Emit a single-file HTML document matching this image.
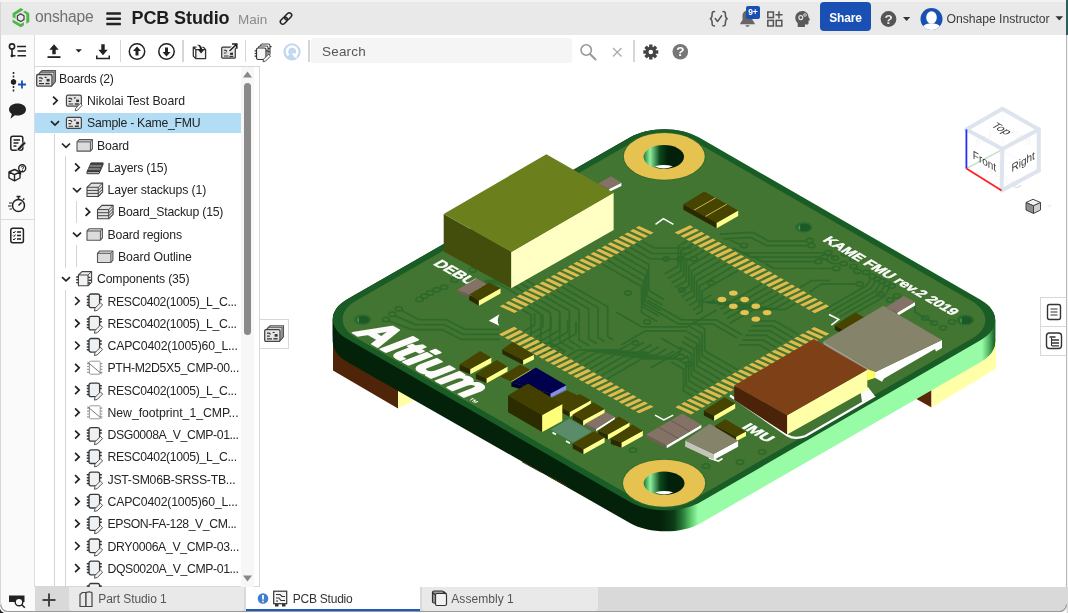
<!DOCTYPE html>
<html lang="en">
<head>
<meta charset="utf-8">
<title>PCB Studio | Onshape</title>
<style>
*{box-sizing:border-box;margin:0;padding:0}
html,body{width:1068px;height:613px;overflow:hidden;background:#fff;font-family:"Liberation Sans",sans-serif;color:#333}
#app{will-change:transform;position:relative;width:1068px;height:613px;overflow:hidden;background:#fff}
.abs{position:absolute}
#topbar{position:absolute;left:0;top:0;width:1068px;height:35px;background:#e9e9e9}
#leftbar{position:absolute;left:0;top:35px;width:35px;height:578px;background:#fafafa;border-right:1px solid #dcdcdc}
#toolbar{position:absolute;left:35px;top:35px;width:1033px;height:31px;background:#fff}
.sep{position:absolute;width:1.6px;background:#d6d6d6;top:40px;height:22px;margin-left:-0.3px}
#search{position:absolute;left:311px;top:38px;width:261px;height:25px;background:#f5f5f5;border-radius:3px}
#search span{position:absolute;left:11px;top:6px;font-size:13.5px;color:#555;letter-spacing:.2px}
#tree{position:absolute;left:35px;top:66px;width:225px;height:521px;border:1px solid #d8d8d8;border-left:none;background:#fff;overflow:hidden}
.row{position:absolute;left:0;height:22px;font-size:12.25px;color:#242424;white-space:nowrap;line-height:22px}
.row .t{position:absolute;top:0}
.sel{position:absolute;left:0;top:47px;width:206px;height:20px;background:#b3dcf5}
.chev{position:absolute;width:10px;height:10px}
.guide{position:absolute;width:1px;background:#d4d4d4}
#tabbar{position:absolute;left:35px;top:587px;width:1033px;height:26px;background:#d9d9d9}
.tab{position:absolute;top:0;height:24px;background:#e9e9e9;font-size:12px;color:#555;line-height:24.5px;border-radius:0 0 4px 4px}
.tab.active{background:#fff;color:#333;border-bottom:2px solid #1b5bbf;border-radius:0}
svg{display:block}
</style>
</head>
<body>
<div id="app">
<svg class="abs" style="left:0;top:0" width="1068" height="613" viewBox="0 0 1068 613">
<defs>
<clipPath id="hc483"><ellipse cx="664.1" cy="483.2" rx="20.4" ry="11.7"/></clipPath>
<clipPath id="hc156"><ellipse cx="663.8" cy="156.9" rx="20.2" ry="12.0"/></clipPath>
<linearGradient id="gside" gradientUnits="userSpaceOnUse" x1="330" x2="998" y1="0" y2="0"><stop offset="0" stop-color="#04220a"/><stop offset="0.495" stop-color="#04220a"/><stop offset="0.515" stop-color="#0c3c16"/><stop offset="0.528" stop-color="#2a7a38"/><stop offset="0.54" stop-color="#5cc86c"/><stop offset="0.551" stop-color="#98fca6"/><stop offset="0.976" stop-color="#98fca6"/><stop offset="0.986" stop-color="#55b866"/><stop offset="0.994" stop-color="#1f6a2e"/><stop offset="1" stop-color="#0f4a1c"/></linearGradient>
<linearGradient id="gright" x1="0" x2="1" y1="0" y2="0"><stop offset="0" stop-color="#9bfaa8"/><stop offset="0.5" stop-color="#63c873"/><stop offset="1" stop-color="#0f4a1c"/></linearGradient>
<linearGradient id="ghole" x1="0" x2="1" y1="0" y2="0"><stop offset="0" stop-color="#1e7a34"/><stop offset="0.16" stop-color="#8ff0a0"/><stop offset="0.4" stop-color="#0b4a1a"/><stop offset="0.6" stop-color="#03200a"/><stop offset="1" stop-color="#03200a"/></linearGradient>
</defs>
<polygon points="333.0,340.0 398.0,380.0 398.0,408.5 333.0,370.5" fill="#4f2408" />
<polygon points="398.0,380.0 416.0,396.0 416.0,399.5 398.0,408.5" fill="#ffffa6" />
<polygon points="915.5,380.0 931.5,380.0 931.5,407.5 915.5,398.5" fill="#5a250a" />
<polygon points="931.5,380.0 996.0,340.0 996.0,368.5 931.5,407.5" fill="#ffffa8" />
<path d="M629.9 158.5 C649.0 147.5 680.0 147.5 699.1 158.6 L980.9 321.9 C1000.0 333.0 1000.0 350.9 980.8 361.9 L701.0 522.9 C681.4 534.1 649.6 534.2 629.9 523.0 L347.3 362.0 C328.1 351.1 328.0 333.2 347.1 322.2 Z" fill="url(#gside)"/>
<path d="M629.9 157.7 C649.0 146.6 680.0 146.6 699.1 157.7 L980.9 321.0 C1000.0 332.1 1000.0 350.0 980.8 361.0 L701.0 522.0 C681.4 533.3 649.6 533.3 629.9 522.1 L347.3 361.0 C328.1 350.1 328.0 332.3 347.1 321.2 Z" fill="url(#gside)"/>
<path d="M629.9 156.8 C649.0 145.7 680.0 145.7 699.1 156.8 L980.9 320.1 C1000.0 331.2 1000.0 349.1 980.8 360.1 L701.0 521.1 C681.4 532.4 649.6 532.5 629.9 521.2 L347.2 360.1 C328.1 349.2 328.0 331.3 347.1 320.3 Z" fill="url(#gside)"/>
<path d="M629.9 155.9 C649.0 144.8 680.0 144.9 699.1 155.9 L980.9 319.2 C1000.0 330.3 1000.0 348.2 980.8 359.2 L701.0 520.2 C681.4 531.5 649.6 531.6 629.9 520.4 L347.2 359.1 C328.1 348.2 328.0 330.4 347.1 319.3 Z" fill="url(#gside)"/>
<path d="M629.9 155.0 C649.0 144.0 680.0 144.0 699.1 155.1 L980.9 318.3 C1000.0 329.4 1000.0 347.3 980.8 358.3 L701.0 519.3 C681.4 530.6 649.6 530.7 629.9 519.5 L347.2 358.2 C328.1 347.2 328.0 329.4 347.1 318.4 Z" fill="url(#gside)"/>
<path d="M629.9 154.1 C649.0 143.1 680.0 143.1 699.1 154.2 L980.9 317.4 C1000.0 328.4 1000.0 346.4 980.8 357.4 L701.0 518.5 C681.4 529.8 649.6 529.8 629.9 518.6 L347.2 357.2 C328.1 346.3 328.0 328.5 347.1 317.4 Z" fill="url(#gside)"/>
<path d="M629.9 153.2 C649.0 142.2 680.0 142.2 699.1 153.3 L980.9 316.5 C1000.0 327.5 1000.0 345.4 980.8 356.5 L701.0 517.6 C681.4 528.9 649.6 528.9 629.9 517.7 L347.2 356.3 C328.1 345.3 328.0 327.5 347.1 316.5 Z" fill="url(#gside)"/>
<path d="M629.9 152.4 C649.0 141.3 680.0 141.3 699.1 152.4 L980.9 315.5 C1000.0 326.6 1000.0 344.5 980.8 355.5 L701.0 516.7 C681.4 528.0 649.6 528.1 629.9 516.8 L347.2 355.3 C328.0 344.4 328.0 326.5 347.1 315.5 Z" fill="url(#gside)"/>
<path d="M629.9 151.5 C649.0 140.4 680.0 140.5 699.1 151.5 L980.9 314.6 C1000.0 325.7 1000.0 343.6 980.8 354.6 L701.0 515.8 C681.4 527.1 649.6 527.2 629.9 516.0 L347.2 354.4 C328.0 343.4 328.0 325.6 347.1 314.5 Z" fill="url(#gside)"/>
<path d="M629.8 150.6 C649.0 139.6 680.0 139.6 699.1 150.7 L980.9 313.7 C1000.0 324.8 1000.0 342.7 980.8 353.7 L701.0 515.0 C681.4 526.3 649.6 526.3 629.9 515.1 L347.2 353.4 C328.0 342.5 328.0 324.6 347.2 313.6 Z" fill="url(#gside)"/>
<path d="M629.8 149.7 C649.0 138.7 680.0 138.7 699.1 149.8 L980.9 312.8 C1000.0 323.9 1000.0 341.8 980.8 352.8 L701.0 514.1 C681.4 525.4 649.6 525.4 629.9 514.2 L347.2 352.5 C328.0 341.5 328.0 323.7 347.2 312.6 Z" fill="url(#gside)"/>
<path d="M629.8 148.8 C649.0 137.8 680.0 137.8 699.1 148.9 L980.9 311.9 C1000.0 322.9 1000.0 340.9 980.8 351.9 L701.0 513.2 C681.4 524.5 649.6 524.6 629.9 513.3 L347.2 351.5 C328.0 340.6 328.0 322.7 347.2 311.7 Z" fill="url(#gside)"/>
<path d="M629.8 148.0 C649.0 136.9 680.0 137.0 699.1 148.0 L980.9 311.0 C1000.0 322.0 1000.0 339.9 980.8 351.0 L701.0 512.3 C681.4 523.6 649.6 523.7 629.9 512.4 L347.2 350.6 C328.0 339.6 328.0 321.8 347.2 310.7 Z" fill="url(#gside)"/>
<path d="M629.8 147.1 C649.0 136.1 680.0 136.1 699.1 147.1 L980.9 310.1 C1000.0 321.1 1000.0 339.0 980.8 350.1 L701.0 511.4 C681.4 522.8 649.6 522.8 629.9 511.5 L347.2 349.6 C328.0 338.6 328.0 320.8 347.2 309.8 Z" fill="url(#gside)"/>
<path d="M629.8 146.2 C649.0 135.2 680.0 135.2 699.1 146.3 L980.9 309.1 C1000.0 320.2 1000.0 338.1 980.9 349.2 L701.0 510.6 C681.4 521.9 649.6 521.9 629.9 510.7 L347.2 348.7 C328.0 337.7 328.0 319.9 347.2 308.8 Z" fill="url(#gside)"/>
<path d="M629.8 145.3 C649.0 134.3 680.0 134.3 699.1 145.4 L980.9 308.2 C1000.0 319.3 1000.0 337.2 980.9 348.2 L701.0 509.7 C681.4 521.0 649.6 521.0 629.9 509.8 L347.2 347.7 C328.0 336.7 328.0 318.9 347.2 307.9 Z" fill="url(#gside)"/>
<path d="M629.8 144.4 C649.0 133.4 680.0 133.5 699.1 144.5 L980.9 307.3 C1000.0 318.4 1000.0 336.3 980.9 347.3 L701.0 508.8 C681.4 520.1 649.6 520.2 629.9 508.9 L347.2 346.8 C328.0 335.8 328.0 317.9 347.2 306.9 Z" fill="url(#gside)"/>
<path d="M629.8 143.6 C649.0 132.5 680.0 132.6 699.1 143.6 L980.9 306.4 C1000.0 317.5 1000.0 335.4 980.9 346.4 L701.0 507.9 C681.4 519.2 649.6 519.3 629.9 508.0 L347.2 345.8 C328.0 334.8 328.0 317.0 347.2 306.0 Z" fill="url(#gside)"/>
<path d="M629.8 142.7 C649.0 131.7 680.0 131.7 699.1 142.8 L980.9 305.5 C1000.0 316.5 1000.0 334.5 980.9 345.5 L701.0 507.1 C681.4 518.4 649.6 518.4 629.9 507.1 L347.2 344.9 C328.0 333.9 328.0 316.0 347.2 305.0 Z" fill="url(#gside)"/>
<path d="M629.8 141.8 C649.0 130.8 680.0 130.8 699.1 141.9 L980.9 304.6 C1000.0 315.6 1000.0 333.5 980.9 344.6 L701.0 506.2 C681.4 517.5 649.6 517.5 629.9 506.3 L347.2 343.9 C328.0 332.9 328.0 315.1 347.2 304.1 Z" fill="url(#gside)"/>
<path d="M629.8 140.9 C649.0 129.9 680.0 130.0 699.1 141.0 L980.9 303.7 C1000.0 314.7 1000.0 332.6 980.9 343.7 L701.0 505.3 C681.4 516.6 649.6 516.7 629.9 505.4 L347.2 343.0 C328.0 332.0 328.0 314.1 347.2 303.1 Z" fill="url(#gside)"/>
<path d="M629.8 140.0 C649.0 129.0 680.0 129.1 699.1 140.1 L980.9 302.8 C1000.0 313.8 1000.0 331.7 980.9 342.8 L701.0 504.4 C681.4 515.7 649.6 515.8 630.0 504.5 L347.2 342.0 C328.0 331.0 328.0 313.2 347.2 302.2 Z" fill="url(#gside)"/>
<path d="M629.8 139.1 C649.0 128.2 680.0 128.2 699.1 139.2 L980.9 301.8 C1000.0 312.9 1000.0 330.8 980.9 341.8 L701.0 503.5 C681.4 514.9 649.6 514.9 630.0 503.6 L347.2 341.1 C328.0 330.0 328.0 312.2 347.2 301.2 Z" fill="url(#gside)"/>
<path d="M629.8 138.3 C649.0 127.3 680.0 127.3 699.1 138.4 L980.9 300.9 C1000.0 312.0 1000.0 329.9 980.9 340.9 L701.0 502.7 C681.4 514.0 649.6 514.0 630.0 502.7 L347.2 340.1 C328.0 329.1 328.0 311.3 347.2 300.3 Z" fill="url(#gside)"/>
<path d="M629.8 137.4 C649.0 126.4 680.0 126.4 699.1 137.5 L980.9 300.0 C1000.0 311.1 1000.0 329.0 980.9 340.0 L701.0 501.8 C681.4 513.1 649.6 513.1 630.0 501.9 L347.2 339.1 C328.0 328.1 328.0 310.3 347.2 299.3 Z" fill="url(#gside)"/>
<line x1="522.0" y1="461.8" x2="541.5" y2="472.4" stroke="#4a3a10" stroke-width="1.0" />
<line x1="548.0" y1="475.8" x2="567.0" y2="486.2" stroke="#4a3a10" stroke-width="1.0" />
<path d="M629.8 137.4 C649.0 126.4 680.0 126.4 699.1 137.5 L980.9 300.0 C1000.0 311.1 1000.0 329.0 980.9 340.0 L701.0 501.8 C681.4 513.1 649.6 513.1 630.0 501.9 L347.2 339.1 C328.0 328.1 328.0 310.3 347.2 299.3 Z" fill="#1a5c26"/>
<path d="M632.2 142.4 C650.0 132.2 678.9 132.2 696.7 142.5 L972.0 301.3 C989.8 311.6 989.8 328.3 972.1 338.6 L698.5 496.7 C680.2 507.2 650.7 507.2 632.4 496.7 L356.0 337.7 C338.2 327.5 338.2 310.9 356.0 300.7 Z" fill="#427531"/>
<ellipse cx="362.5" cy="319.6" rx="8.8" ry="5.3" fill="#2b6b2e" />
<ellipse cx="363.1" cy="319.8" rx="6.3" ry="3.8" fill="#1b5a27" />
<path d="M358.7 317.9 q-1.6 2 0 4" stroke="#4f9a52" stroke-width="1.3" fill="none"/>
<ellipse cx="965.4" cy="320.0" rx="8.8" ry="5.3" fill="#2b6b2e" />
<ellipse cx="966.0" cy="320.2" rx="6.3" ry="3.8" fill="#1b5a27" />
<path d="M961.6 318.3 q-1.6 2 0 4" stroke="#4f9a52" stroke-width="1.3" fill="none"/>
<ellipse cx="803.7" cy="227.3" rx="8.8" ry="5.3" fill="#2b6b2e" />
<ellipse cx="804.3" cy="227.5" rx="6.3" ry="3.8" fill="#1b5a27" />
<path d="M799.9 225.6 q-1.6 2 0 4" stroke="#4f9a52" stroke-width="1.3" fill="none"/>
<ellipse cx="664.3" cy="156.4" rx="41.5" ry="24.1" fill="#2f6a2a" />
<ellipse cx="664.3" cy="156.4" rx="40.5" ry="23.3" fill="#e6c251" />
<ellipse cx="663.8" cy="156.9" rx="20.2" ry="12.0" fill="url(#ghole)" />
<path d="M654.8 166.3 Q663.8 163.5 672.8 166.3 Q663.8 170.7 654.8 166.3Z" fill="#fff" clip-path="url(#hc156)"/>
<ellipse cx="664.1" cy="483.2" rx="42.1" ry="24.3" fill="#2f6a2a" />
<ellipse cx="664.1" cy="483.2" rx="41.1" ry="23.5" fill="#e6c251" />
<ellipse cx="664.1" cy="483.2" rx="20.4" ry="11.7" fill="url(#ghole)" />
<path d="M655.1 492.3 Q664.1 489.5 673.1 492.3 Q664.1 496.7 655.1 492.3Z" fill="#fff" clip-path="url(#hc483)"/>
<polyline points="522.5,309.9 531.1,314.9 531.1,344.9 550.2,355.9" fill="none" stroke="#2c692b" stroke-width="1.7" stroke-linejoin="round"/>
<polyline points="528.1,306.6 540.7,313.9 540.7,343.9 558.0,353.9" fill="none" stroke="#2c692b" stroke-width="1.7" stroke-linejoin="round"/>
<polyline points="533.8,303.3 550.3,312.8 550.3,342.8 565.9,351.8" fill="none" stroke="#2c692b" stroke-width="1.7" stroke-linejoin="round"/>
<polyline points="539.5,300.1 559.8,311.8 559.8,341.8 573.7,349.8" fill="none" stroke="#2c692b" stroke-width="1.7" stroke-linejoin="round"/>
<polyline points="545.2,296.8 569.4,310.8 569.4,340.8 581.5,347.8" fill="none" stroke="#2c692b" stroke-width="1.7" stroke-linejoin="round"/>
<polyline points="550.8,293.5 579.0,309.8 579.0,339.8 589.4,345.8" fill="none" stroke="#2c692b" stroke-width="1.7" stroke-linejoin="round"/>
<polyline points="556.5,290.2 588.6,308.8 588.6,338.8 597.2,343.8" fill="none" stroke="#2c692b" stroke-width="1.7" stroke-linejoin="round"/>
<polyline points="562.2,287.0 598.1,307.7 598.1,337.7 605.0,341.7" fill="none" stroke="#2c692b" stroke-width="1.7" stroke-linejoin="round"/>
<polyline points="567.9,283.7 607.7,306.7 607.7,336.7 612.9,339.7" fill="none" stroke="#2c692b" stroke-width="1.7" stroke-linejoin="round"/>
<polyline points="602.1,263.9 641.6,286.6 641.6,312.6 657.1,321.6" fill="none" stroke="#2c692b" stroke-width="1.7" stroke-linejoin="round"/>
<polyline points="607.8,260.6 643.3,281.1 643.3,307.1 658.9,316.1" fill="none" stroke="#2c692b" stroke-width="1.7" stroke-linejoin="round"/>
<polyline points="613.5,257.3 645.1,275.6 645.1,301.6 660.7,310.6" fill="none" stroke="#2c692b" stroke-width="1.7" stroke-linejoin="round"/>
<polyline points="619.2,254.1 646.9,270.1 646.9,296.1 662.5,305.1" fill="none" stroke="#2c692b" stroke-width="1.7" stroke-linejoin="round"/>
<polyline points="624.8,250.8 648.7,264.5 648.7,290.5 664.2,299.5" fill="none" stroke="#2c692b" stroke-width="1.7" stroke-linejoin="round"/>
<polyline points="630.5,247.5 650.4,259.0 688.5,259.0" fill="none" stroke="#2c692b" stroke-width="1.7" stroke-linejoin="round"/>
<polyline points="636.2,244.2 652.2,253.5 690.3,253.5" fill="none" stroke="#2c692b" stroke-width="1.7" stroke-linejoin="round"/>
<polyline points="641.9,241.0 654.0,248.0 692.1,248.0" fill="none" stroke="#2c692b" stroke-width="1.7" stroke-linejoin="round"/>
<ellipse cx="666.2" cy="258.9" rx="3.3" ry="2.0" fill="none" stroke="#2c692b" stroke-width="1.6"/>
<ellipse cx="680.1" cy="258.9" rx="3.3" ry="2.0" fill="none" stroke="#2c692b" stroke-width="1.6"/>
<ellipse cx="693.9" cy="258.9" rx="3.3" ry="2.0" fill="none" stroke="#2c692b" stroke-width="1.6"/>
<polyline points="567.5,355.9 577.9,349.9 619.5,349.9 636.8,339.9" fill="none" stroke="#2c692b" stroke-width="1.7" stroke-linejoin="round"/>
<polyline points="573.2,359.2 587.0,351.2 628.6,351.2 644.2,342.2" fill="none" stroke="#2c692b" stroke-width="1.7" stroke-linejoin="round"/>
<polyline points="578.9,362.4 596.2,352.4 637.7,352.4 651.6,344.4" fill="none" stroke="#2c692b" stroke-width="1.7" stroke-linejoin="round"/>
<polyline points="584.5,365.7 605.3,353.7 646.9,353.7 659.0,346.7" fill="none" stroke="#2c692b" stroke-width="1.7" stroke-linejoin="round"/>
<polyline points="590.2,369.0 614.4,355.0 656.0,355.0 666.4,349.0" fill="none" stroke="#2c692b" stroke-width="1.7" stroke-linejoin="round"/>
<polyline points="595.9,372.3 623.6,356.3 665.1,356.3 673.8,351.3" fill="none" stroke="#2c692b" stroke-width="1.7" stroke-linejoin="round"/>
<polyline points="601.5,375.5 632.7,357.5 674.3,357.5 681.2,353.5" fill="none" stroke="#2c692b" stroke-width="1.7" stroke-linejoin="round"/>
<polyline points="607.2,378.8 641.9,358.8 683.4,358.8 688.6,355.8" fill="none" stroke="#2c692b" stroke-width="1.7" stroke-linejoin="round"/>
<polyline points="524.2,330.9 534.6,324.9 534.6,312.9" fill="none" stroke="#2c692b" stroke-width="1.7" stroke-linejoin="round"/>
<polyline points="529.9,334.2 542.9,326.7 542.9,314.7" fill="none" stroke="#2c692b" stroke-width="1.7" stroke-linejoin="round"/>
<polyline points="535.6,337.4 551.1,328.4 551.1,316.4" fill="none" stroke="#2c692b" stroke-width="1.7" stroke-linejoin="round"/>
<polyline points="541.2,340.7 559.4,330.2 559.4,318.2" fill="none" stroke="#2c692b" stroke-width="1.7" stroke-linejoin="round"/>
<polyline points="546.9,344.0 567.7,332.0 567.7,320.0" fill="none" stroke="#2c692b" stroke-width="1.7" stroke-linejoin="round"/>
<polyline points="552.6,347.3 576.0,333.8 576.0,321.8" fill="none" stroke="#2c692b" stroke-width="1.7" stroke-linejoin="round"/>
<polyline points="687.0,240.9 678.4,245.9 678.4,265.9 664.5,273.9" fill="none" stroke="#2c692b" stroke-width="1.7" stroke-linejoin="round"/>
<polyline points="692.7,244.2 681.0,250.9 681.0,270.9 668.0,278.4" fill="none" stroke="#2c692b" stroke-width="1.7" stroke-linejoin="round"/>
<polyline points="698.4,247.4 683.6,255.9 683.6,275.9 671.5,282.9" fill="none" stroke="#2c692b" stroke-width="1.7" stroke-linejoin="round"/>
<polyline points="704.0,250.7 686.3,261.0 686.3,281.0 675.0,287.5" fill="none" stroke="#2c692b" stroke-width="1.7" stroke-linejoin="round"/>
<polyline points="709.7,254.0 688.9,266.0 688.9,286.0 678.5,292.0" fill="none" stroke="#2c692b" stroke-width="1.7" stroke-linejoin="round"/>
<polyline points="715.4,257.3 691.6,271.0 691.6,291.0 682.0,296.5" fill="none" stroke="#2c692b" stroke-width="1.7" stroke-linejoin="round"/>
<polyline points="721.0,260.5 694.2,276.0 694.2,296.0 685.5,301.0" fill="none" stroke="#2c692b" stroke-width="1.7" stroke-linejoin="round"/>
<polyline points="726.7,263.8 696.8,281.1 696.8,301.1 689.1,305.6" fill="none" stroke="#2c692b" stroke-width="1.7" stroke-linejoin="round"/>
<polyline points="732.4,267.1 699.5,286.1 699.5,306.1 692.6,310.1" fill="none" stroke="#2c692b" stroke-width="1.7" stroke-linejoin="round"/>
<polyline points="738.1,270.4 702.1,291.1 702.1,311.1 696.1,314.6" fill="none" stroke="#2c692b" stroke-width="1.7" stroke-linejoin="round"/>
<polyline points="761.5,283.9 730.3,301.9 699.1,301.9 711.3,294.9" fill="none" stroke="#2c692b" stroke-width="1.7" stroke-linejoin="round"/>
<polyline points="767.2,287.2 739.5,303.2 708.3,303.2 714.3,299.7" fill="none" stroke="#2c692b" stroke-width="1.7" stroke-linejoin="round"/>
<polyline points="772.8,290.4 748.6,304.4 717.4,304.4 717.4,304.4" fill="none" stroke="#2c692b" stroke-width="1.7" stroke-linejoin="round"/>
<polyline points="778.5,293.7 757.7,305.7 726.5,305.7 720.5,309.2" fill="none" stroke="#2c692b" stroke-width="1.7" stroke-linejoin="round"/>
<polyline points="784.2,297.0 766.9,307.0 735.7,307.0 723.6,314.0" fill="none" stroke="#2c692b" stroke-width="1.7" stroke-linejoin="round"/>
<polyline points="789.9,300.3 776.0,308.3 744.8,308.3 726.6,318.8" fill="none" stroke="#2c692b" stroke-width="1.7" stroke-linejoin="round"/>
<polyline points="795.5,303.5 785.1,309.5 754.0,309.5 729.7,323.5" fill="none" stroke="#2c692b" stroke-width="1.7" stroke-linejoin="round"/>
<polyline points="692.2,395.9 683.6,390.9 683.6,368.9 671.4,361.9" fill="none" stroke="#2c692b" stroke-width="1.7" stroke-linejoin="round"/>
<polyline points="697.9,392.6 686.2,385.9 686.2,363.9 674.1,356.9" fill="none" stroke="#2c692b" stroke-width="1.7" stroke-linejoin="round"/>
<polyline points="703.6,389.3 688.8,380.8 688.8,358.8 676.7,351.8" fill="none" stroke="#2c692b" stroke-width="1.7" stroke-linejoin="round"/>
<polyline points="709.2,386.1 691.5,375.8 691.5,353.8 679.4,346.8" fill="none" stroke="#2c692b" stroke-width="1.7" stroke-linejoin="round"/>
<polyline points="714.9,382.8 694.1,370.8 694.1,348.8 682.0,341.8" fill="none" stroke="#2c692b" stroke-width="1.7" stroke-linejoin="round"/>
<polyline points="720.6,379.5 696.8,365.8 696.8,343.8 684.6,336.8" fill="none" stroke="#2c692b" stroke-width="1.7" stroke-linejoin="round"/>
<polyline points="726.2,376.2 699.4,360.8 699.4,338.8 687.3,331.8" fill="none" stroke="#2c692b" stroke-width="1.7" stroke-linejoin="round"/>
<polyline points="731.9,373.0 702.0,355.7 702.0,333.7 689.9,326.7" fill="none" stroke="#2c692b" stroke-width="1.7" stroke-linejoin="round"/>
<polyline points="737.6,369.7 704.7,350.7 704.7,328.7 692.6,321.7" fill="none" stroke="#2c692b" stroke-width="1.7" stroke-linejoin="round"/>
<polyline points="770.2,350.9 759.8,344.9 739.0,344.9" fill="none" stroke="#2c692b" stroke-width="1.7" stroke-linejoin="round"/>
<polyline points="775.8,347.6 762.8,340.1 742.1,340.1" fill="none" stroke="#2c692b" stroke-width="1.7" stroke-linejoin="round"/>
<polyline points="781.5,344.3 765.9,335.3 745.1,335.3" fill="none" stroke="#2c692b" stroke-width="1.7" stroke-linejoin="round"/>
<polyline points="787.2,341.1 769.0,330.6 748.2,330.6" fill="none" stroke="#2c692b" stroke-width="1.7" stroke-linejoin="round"/>
<polyline points="792.8,337.8 772.1,325.8 751.3,325.8" fill="none" stroke="#2c692b" stroke-width="1.7" stroke-linejoin="round"/>
<polyline points="798.5,334.5 775.1,321.0 754.3,321.0" fill="none" stroke="#2c692b" stroke-width="1.7" stroke-linejoin="round"/>
<polyline points="647.2,299.9 681.8,319.9 716.5,319.9 742.4,334.9" fill="none" stroke="#2c692b" stroke-width="1.7" stroke-linejoin="round"/>
<polyline points="642.0,302.9 678.4,323.9 713.0,323.9 737.2,337.9" fill="none" stroke="#2c692b" stroke-width="1.7" stroke-linejoin="round"/>
<polyline points="616.0,311.9 642.0,326.9 687.0,326.9 716.5,309.9" fill="none" stroke="#2c692b" stroke-width="1.7" stroke-linejoin="round"/>
<polyline points="621.2,344.9 645.4,330.9 687.0,330.9" fill="none" stroke="#2c692b" stroke-width="1.7" stroke-linejoin="round"/>
<polyline points="650.6,367.9 681.8,349.9 661.0,337.9" fill="none" stroke="#2c692b" stroke-width="1.7" stroke-linejoin="round"/>
<ellipse cx="647.2" cy="321.9" rx="3.3" ry="2.0" fill="none" stroke="#2c692b" stroke-width="1.6"/>
<ellipse cx="635.1" cy="342.9" rx="3.3" ry="2.0" fill="none" stroke="#2c692b" stroke-width="1.6"/>
<ellipse cx="643.7" cy="353.9" rx="3.3" ry="2.0" fill="none" stroke="#2c692b" stroke-width="1.6"/>
<ellipse cx="699.1" cy="347.9" rx="3.3" ry="2.0" fill="none" stroke="#2c692b" stroke-width="1.6"/>
<ellipse cx="681.8" cy="289.9" rx="3.3" ry="2.0" fill="none" stroke="#2c692b" stroke-width="1.6"/>
<ellipse cx="628.1" cy="292.9" rx="3.3" ry="2.0" fill="none" stroke="#2c692b" stroke-width="1.6"/>
<ellipse cx="739.0" cy="306.9" rx="3.3" ry="2.0" fill="none" stroke="#2c692b" stroke-width="1.6"/>
<ellipse cx="688.7" cy="363.9" rx="3.3" ry="2.0" fill="none" stroke="#2c692b" stroke-width="1.6"/>
<ellipse cx="711.3" cy="282.9" rx="3.3" ry="2.0" fill="none" stroke="#2c692b" stroke-width="1.6"/>
<polyline points="719.6,234.2 752.8,232.3 768.5,241.1 806.7,241.1" fill="none" stroke="#2c692b" stroke-width="1.7" stroke-linejoin="round"/>
<ellipse cx="809.8" cy="240.6" rx="3.5" ry="2.2" fill="none" stroke="#2c692b" stroke-width="1.6"/>
<polyline points="723.5,238.8 750.9,237.4 766.5,245.6 808.0,245.6" fill="none" stroke="#2c692b" stroke-width="1.7" stroke-linejoin="round"/>
<ellipse cx="811.5" cy="245.6" rx="3.5" ry="2.2" fill="none" stroke="#2c692b" stroke-width="1.6"/>
<ellipse cx="744.0" cy="245.4" rx="3.5" ry="2.2" fill="none" stroke="#2c692b" stroke-width="1.6"/>
<polyline points="730.0,240.0 741.0,245.0" fill="none" stroke="#2c692b" stroke-width="1.7" stroke-linejoin="round"/>
<polyline points="733.0,247.8 742.0,252.8 825.0,252.8" fill="none" stroke="#2c692b" stroke-width="1.7" stroke-linejoin="round"/>
<ellipse cx="828.4" cy="252.8" rx="3.5" ry="2.2" fill="none" stroke="#2c692b" stroke-width="1.6"/>
<polyline points="742.0,252.1 751.0,257.1 821.0,257.1" fill="none" stroke="#2c692b" stroke-width="1.7" stroke-linejoin="round"/>
<ellipse cx="824.4" cy="257.1" rx="3.5" ry="2.2" fill="none" stroke="#2c692b" stroke-width="1.6"/>
<polyline points="753.0,256.6 762.0,261.6 815.0,261.6" fill="none" stroke="#2c692b" stroke-width="1.7" stroke-linejoin="round"/>
<ellipse cx="818.4" cy="261.6" rx="3.5" ry="2.2" fill="none" stroke="#2c692b" stroke-width="1.6"/>
<polyline points="765.0,263.5 774.0,268.5 833.0,268.5" fill="none" stroke="#2c692b" stroke-width="1.7" stroke-linejoin="round"/>
<ellipse cx="836.4" cy="268.5" rx="3.5" ry="2.2" fill="none" stroke="#2c692b" stroke-width="1.6"/>
<polyline points="828.0,254.0 835.0,258.1" fill="none" stroke="#2c692b" stroke-width="1.7" stroke-linejoin="round"/>
<polyline points="824.0,258.5 832.0,263.5 841.0,263.6" fill="none" stroke="#2c692b" stroke-width="1.7" stroke-linejoin="round"/>
<ellipse cx="835.0" cy="258.1" rx="3.5" ry="2.2" fill="none" stroke="#2c692b" stroke-width="1.6"/>
<ellipse cx="843.8" cy="263.6" rx="3.5" ry="2.2" fill="none" stroke="#2c692b" stroke-width="1.6"/>
<ellipse cx="853.6" cy="266.5" rx="3.5" ry="2.2" fill="none" stroke="#2c692b" stroke-width="1.6"/>
<ellipse cx="857.5" cy="271.4" rx="3.5" ry="2.2" fill="none" stroke="#2c692b" stroke-width="1.6"/>
<ellipse cx="866.3" cy="272.4" rx="3.5" ry="2.2" fill="none" stroke="#2c692b" stroke-width="1.6"/>
<ellipse cx="845.0" cy="254.0" rx="3.5" ry="2.2" fill="none" stroke="#2c692b" stroke-width="1.6"/>
<ellipse cx="853.0" cy="259.0" rx="3.5" ry="2.2" fill="none" stroke="#2c692b" stroke-width="1.6"/>
<polyline points="809.6,292.0 821.3,284.1 856.6,284.1" fill="none" stroke="#2c692b" stroke-width="1.7" stroke-linejoin="round"/>
<ellipse cx="859.8" cy="284.1" rx="3.5" ry="2.2" fill="none" stroke="#2c692b" stroke-width="1.6"/>
<polyline points="800.0,287.5 812.0,280.5 830.0,280.5" fill="none" stroke="#2c692b" stroke-width="1.7" stroke-linejoin="round"/>
<polyline points="826.0,309.0 866.0,286.0 871.0,279.0" fill="none" stroke="#2c692b" stroke-width="1.7" stroke-linejoin="round"/>
<ellipse cx="872.5" cy="276.5" rx="3.5" ry="2.2" fill="none" stroke="#2c692b" stroke-width="1.6"/>
<polyline points="830.6,311.6 870.6,288.6 875.6,281.2" fill="none" stroke="#2c692b" stroke-width="1.7" stroke-linejoin="round"/>
<ellipse cx="877.3" cy="278.9" rx="3.5" ry="2.2" fill="none" stroke="#2c692b" stroke-width="1.6"/>
<polyline points="835.2,314.2 875.2,291.2 880.2,283.4" fill="none" stroke="#2c692b" stroke-width="1.7" stroke-linejoin="round"/>
<ellipse cx="882.1" cy="281.3" rx="3.5" ry="2.2" fill="none" stroke="#2c692b" stroke-width="1.6"/>
<polyline points="839.8,316.8 879.8,293.8 884.8,285.6" fill="none" stroke="#2c692b" stroke-width="1.7" stroke-linejoin="round"/>
<ellipse cx="886.9" cy="283.7" rx="3.5" ry="2.2" fill="none" stroke="#2c692b" stroke-width="1.6"/>
<polyline points="844.4,319.4 884.4,296.4 889.4,287.8" fill="none" stroke="#2c692b" stroke-width="1.7" stroke-linejoin="round"/>
<ellipse cx="891.7" cy="286.1" rx="3.5" ry="2.2" fill="none" stroke="#2c692b" stroke-width="1.6"/>
<ellipse cx="890.0" cy="300.0" rx="3.5" ry="2.2" fill="none" stroke="#2c692b" stroke-width="1.6"/>
<ellipse cx="897.0" cy="296.0" rx="3.5" ry="2.2" fill="none" stroke="#2c692b" stroke-width="1.6"/>
<ellipse cx="880.0" cy="294.0" rx="3.5" ry="2.2" fill="none" stroke="#2c692b" stroke-width="1.6"/>
<ellipse cx="419.5" cy="299.5" rx="3.6" ry="2.2" fill="none" stroke="#2c692b" stroke-width="1.6"/>
<ellipse cx="424.4" cy="296.3" rx="3.6" ry="2.2" fill="none" stroke="#2c692b" stroke-width="1.6"/>
<ellipse cx="430.1" cy="293.0" rx="3.6" ry="2.2" fill="none" stroke="#2c692b" stroke-width="1.6"/>
<ellipse cx="436.7" cy="289.8" rx="3.6" ry="2.2" fill="none" stroke="#2c692b" stroke-width="1.6"/>
<ellipse cx="444.0" cy="287.3" rx="3.6" ry="2.2" fill="none" stroke="#2c692b" stroke-width="1.6"/>
<ellipse cx="454.6" cy="280.0" rx="3.6" ry="2.2" fill="none" stroke="#2c692b" stroke-width="1.6"/>
<ellipse cx="472.6" cy="270.2" rx="3.6" ry="2.2" fill="none" stroke="#2c692b" stroke-width="1.6"/>
<ellipse cx="398.8" cy="308.8" rx="3.5" ry="2.2" fill="none" stroke="#2c692b" stroke-width="1.6"/>
<polyline points="401.3,310.2 418.3,319.6 445.8,319.6 465.3,329.4 500.0,329.4" fill="none" stroke="#2c692b" stroke-width="1.7" stroke-linejoin="round"/>
<ellipse cx="392.4" cy="314.2" rx="3.5" ry="2.2" fill="none" stroke="#2c692b" stroke-width="1.6"/>
<polyline points="394.9,315.6 415.3,324.6 443.8,324.6 463.3,334.4 500.0,334.4" fill="none" stroke="#2c692b" stroke-width="1.7" stroke-linejoin="round"/>
<ellipse cx="386.0" cy="319.6" rx="3.5" ry="2.2" fill="none" stroke="#2c692b" stroke-width="1.6"/>
<polyline points="388.5,321.0 412.3,329.6 441.8,329.6 461.3,339.4 500.0,339.4" fill="none" stroke="#2c692b" stroke-width="1.7" stroke-linejoin="round"/>
<polyline points="534.6,284.9 524.2,278.9 493.0,278.9" fill="none" stroke="#2c692b" stroke-width="1.7" stroke-linejoin="round"/>
<polyline points="528.9,288.2 515.9,280.7 484.8,280.7" fill="none" stroke="#2c692b" stroke-width="1.7" stroke-linejoin="round"/>
<polyline points="523.3,291.4 507.7,282.4 476.5,282.4" fill="none" stroke="#2c692b" stroke-width="1.7" stroke-linejoin="round"/>
<polyline points="517.6,294.7 499.4,284.2 468.2,284.2" fill="none" stroke="#2c692b" stroke-width="1.7" stroke-linejoin="round"/>
<ellipse cx="633.0" cy="450.0" rx="3.7" ry="2.3" fill="none" stroke="#2c692b" stroke-width="1.6"/>
<ellipse cx="762.0" cy="452.0" rx="3.7" ry="2.3" fill="none" stroke="#2c692b" stroke-width="1.6"/>
<ellipse cx="740.0" cy="462.0" rx="3.7" ry="2.3" fill="none" stroke="#2c692b" stroke-width="1.6"/>
<ellipse cx="706.0" cy="466.0" rx="3.7" ry="2.3" fill="none" stroke="#2c692b" stroke-width="1.6"/>
<ellipse cx="560.0" cy="352.0" rx="3.7" ry="2.3" fill="none" stroke="#2c692b" stroke-width="1.6"/>
<ellipse cx="548.0" cy="345.0" rx="3.7" ry="2.3" fill="none" stroke="#2c692b" stroke-width="1.6"/>
<ellipse cx="925.0" cy="318.0" rx="3.5" ry="2.2" fill="none" stroke="#2c692b" stroke-width="1.6"/>
<ellipse cx="934.0" cy="323.0" rx="3.5" ry="2.2" fill="none" stroke="#2c692b" stroke-width="1.6"/>
<ellipse cx="943.0" cy="328.0" rx="3.5" ry="2.2" fill="none" stroke="#2c692b" stroke-width="1.6"/>
<ellipse cx="952.0" cy="322.0" rx="3.5" ry="2.2" fill="none" stroke="#2c692b" stroke-width="1.6"/>
<ellipse cx="905.0" cy="330.0" rx="3.5" ry="2.2" fill="none" stroke="#2c692b" stroke-width="1.6"/>
<polyline points="925.0,318.0 915.0,312.0 915.0,306.0" fill="none" stroke="#2c692b" stroke-width="1.7" stroke-linejoin="round"/>
<polyline points="934.0,323.0 924.0,317.0" fill="none" stroke="#2c692b" stroke-width="1.7" stroke-linejoin="round"/>
<polygon points="499.7,306.2 514.4,313.0 517.7,311.2 503.0,304.4" fill="#dfba4d" />
<polygon points="505.4,303.0 520.1,309.8 523.4,307.9 508.7,301.1" fill="#dfba4d" />
<polygon points="511.0,299.7 525.7,306.5 529.0,304.6 514.3,297.8" fill="#dfba4d" />
<polygon points="516.7,296.4 531.4,303.2 534.7,301.3 520.0,294.5" fill="#dfba4d" />
<polygon points="522.4,293.2 537.1,300.0 540.4,298.1 525.7,291.3" fill="#dfba4d" />
<polygon points="528.0,289.9 542.7,296.7 546.0,294.8 531.3,288.0" fill="#dfba4d" />
<polygon points="533.7,286.6 548.4,293.4 551.7,291.5 537.0,284.7" fill="#dfba4d" />
<polygon points="539.4,283.4 554.1,290.2 557.4,288.3 542.7,281.5" fill="#dfba4d" />
<polygon points="545.0,280.1 559.7,286.9 563.0,285.0 548.3,278.2" fill="#dfba4d" />
<polygon points="550.7,276.8 565.4,283.6 568.7,281.7 554.0,274.9" fill="#dfba4d" />
<polygon points="556.4,273.5 571.1,280.3 574.4,278.4 559.7,271.6" fill="#dfba4d" />
<polygon points="562.0,270.3 576.7,277.1 580.0,275.2 565.3,268.4" fill="#dfba4d" />
<polygon points="567.7,267.0 582.4,273.8 585.7,271.9 571.0,265.1" fill="#dfba4d" />
<polygon points="573.4,263.7 588.1,270.5 591.4,268.6 576.7,261.8" fill="#dfba4d" />
<polygon points="579.0,260.5 593.7,267.3 597.0,265.4 582.3,258.6" fill="#dfba4d" />
<polygon points="584.7,257.2 599.4,264.0 602.7,262.1 588.0,255.3" fill="#dfba4d" />
<polygon points="590.4,253.9 605.1,260.7 608.4,258.8 593.7,252.0" fill="#dfba4d" />
<polygon points="596.0,250.6 610.7,257.4 614.0,255.5 599.3,248.7" fill="#dfba4d" />
<polygon points="601.7,247.4 616.4,254.2 619.7,252.3 605.0,245.5" fill="#dfba4d" />
<polygon points="607.4,244.1 622.1,250.9 625.4,249.0 610.7,242.2" fill="#dfba4d" />
<polygon points="613.0,240.8 627.7,247.6 631.0,245.7 616.3,238.9" fill="#dfba4d" />
<polygon points="618.7,237.6 633.4,244.4 636.7,242.5 622.0,235.7" fill="#dfba4d" />
<polygon points="624.4,234.3 639.1,241.1 642.4,239.2 627.7,232.4" fill="#dfba4d" />
<polygon points="630.0,231.0 644.7,237.8 648.0,235.9 633.3,229.1" fill="#dfba4d" />
<polygon points="635.7,227.7 650.4,234.5 653.7,232.7 639.0,225.9" fill="#dfba4d" />
<polygon points="674.8,232.6 690.1,225.2 693.4,227.2 678.1,234.6" fill="#dfba4d" />
<polygon points="680.5,235.9 695.8,228.5 699.1,230.4 683.8,237.8" fill="#dfba4d" />
<polygon points="686.2,239.2 701.4,231.8 704.7,233.7 689.5,241.1" fill="#dfba4d" />
<polygon points="691.9,242.5 707.1,235.1 710.4,237.0 695.2,244.4" fill="#dfba4d" />
<polygon points="697.6,245.7 712.7,238.4 716.0,240.3 700.9,247.7" fill="#dfba4d" />
<polygon points="703.3,249.0 718.4,241.7 721.7,243.6 706.6,250.9" fill="#dfba4d" />
<polygon points="709.0,252.3 724.1,245.0 727.3,246.9 712.2,254.2" fill="#dfba4d" />
<polygon points="714.6,255.6 729.7,248.3 733.0,250.2 717.9,257.5" fill="#dfba4d" />
<polygon points="720.3,258.8 735.4,251.6 738.7,253.5 723.6,260.8" fill="#dfba4d" />
<polygon points="726.0,262.1 741.0,254.9 744.3,256.8 729.3,264.0" fill="#dfba4d" />
<polygon points="731.7,265.4 746.7,258.2 750.0,260.1 735.0,267.3" fill="#dfba4d" />
<polygon points="737.4,268.7 752.3,261.5 755.6,263.4 740.7,270.6" fill="#dfba4d" />
<polygon points="743.1,271.9 758.0,264.7 761.3,266.7 746.4,273.9" fill="#dfba4d" />
<polygon points="748.8,275.2 763.7,268.0 767.0,269.9 752.1,277.1" fill="#dfba4d" />
<polygon points="754.5,278.5 769.3,271.3 772.6,273.2 757.8,280.4" fill="#dfba4d" />
<polygon points="760.2,281.8 775.0,274.6 778.3,276.5 763.5,283.7" fill="#dfba4d" />
<polygon points="765.9,285.0 780.6,277.9 783.9,279.8 769.2,287.0" fill="#dfba4d" />
<polygon points="771.6,288.3 786.3,281.2 789.6,283.1 774.9,290.2" fill="#dfba4d" />
<polygon points="777.3,291.6 792.0,284.5 795.2,286.4 780.5,293.5" fill="#dfba4d" />
<polygon points="782.9,294.9 797.6,287.8 800.9,289.7 786.2,296.8" fill="#dfba4d" />
<polygon points="788.6,298.1 803.3,291.1 806.6,293.0 791.9,300.1" fill="#dfba4d" />
<polygon points="794.3,301.4 808.9,294.4 812.2,296.3 797.6,303.3" fill="#dfba4d" />
<polygon points="800.0,304.7 814.6,297.7 817.9,299.6 803.3,306.6" fill="#dfba4d" />
<polygon points="805.7,308.0 820.2,301.0 823.5,302.9 809.0,309.9" fill="#dfba4d" />
<polygon points="811.4,311.2 825.9,304.2 829.2,306.2 814.7,313.2" fill="#dfba4d" />
<polygon points="499.0,334.3 514.2,326.8 517.6,328.7 502.4,336.2" fill="#dfba4d" />
<polygon points="504.7,337.5 519.9,330.1 523.2,331.9 508.1,339.4" fill="#dfba4d" />
<polygon points="510.4,340.7 525.6,333.3 528.9,335.2 513.8,342.6" fill="#dfba4d" />
<polygon points="516.1,344.0 531.2,336.6 534.6,338.4 519.5,345.8" fill="#dfba4d" />
<polygon points="521.8,347.2 536.9,339.8 540.2,341.7 525.2,349.0" fill="#dfba4d" />
<polygon points="527.5,350.4 542.6,343.1 545.9,344.9 530.9,352.3" fill="#dfba4d" />
<polygon points="533.2,353.6 548.2,346.3 551.6,348.2 536.6,355.5" fill="#dfba4d" />
<polygon points="538.9,356.8 553.9,349.6 557.2,351.5 542.3,358.7" fill="#dfba4d" />
<polygon points="544.6,360.0 559.6,352.8 562.9,354.7 548.0,361.9" fill="#dfba4d" />
<polygon points="550.3,363.2 565.2,356.1 568.6,358.0 553.7,365.1" fill="#dfba4d" />
<polygon points="556.0,366.5 570.9,359.3 574.2,361.2 559.4,368.3" fill="#dfba4d" />
<polygon points="561.7,369.7 576.6,362.6 579.9,364.5 565.1,371.5" fill="#dfba4d" />
<polygon points="567.4,372.9 582.2,365.8 585.6,367.7 570.8,374.8" fill="#dfba4d" />
<polygon points="573.1,376.1 587.9,369.1 591.2,371.0 576.5,378.0" fill="#dfba4d" />
<polygon points="578.8,379.3 593.6,372.3 596.9,374.2 582.2,381.2" fill="#dfba4d" />
<polygon points="584.5,382.5 599.2,375.6 602.6,377.5 587.9,384.4" fill="#dfba4d" />
<polygon points="590.2,385.7 604.9,378.8 608.2,380.7 593.6,387.6" fill="#dfba4d" />
<polygon points="595.9,389.0 610.6,382.1 613.9,384.0 599.3,390.8" fill="#dfba4d" />
<polygon points="601.6,392.2 616.2,385.3 619.6,387.2 605.0,394.1" fill="#dfba4d" />
<polygon points="607.3,395.4 621.9,388.6 625.2,390.5 610.7,397.3" fill="#dfba4d" />
<polygon points="613.0,398.6 627.6,391.9 630.9,393.7 616.4,400.5" fill="#dfba4d" />
<polygon points="618.7,401.8 633.2,395.1 636.6,397.0 622.1,403.7" fill="#dfba4d" />
<polygon points="624.4,405.0 638.9,398.4 642.2,400.2 627.8,406.9" fill="#dfba4d" />
<polygon points="630.1,408.2 644.6,401.6 647.9,403.5 633.5,410.1" fill="#dfba4d" />
<polygon points="635.8,411.5 650.2,404.9 653.6,406.7 639.2,413.3" fill="#dfba4d" />
<polygon points="675.4,407.2 691.1,414.4 694.4,412.4 678.7,405.2" fill="#dfba4d" />
<polygon points="681.1,403.9 696.7,411.1 700.0,409.2 684.3,402.0" fill="#dfba4d" />
<polygon points="686.7,400.6 702.3,407.8 705.6,405.9 690.0,398.7" fill="#dfba4d" />
<polygon points="692.3,397.4 708.0,404.5 711.3,402.6 695.6,395.5" fill="#dfba4d" />
<polygon points="698.0,394.1 713.6,401.2 716.9,399.3 701.3,392.2" fill="#dfba4d" />
<polygon points="703.6,390.8 719.2,398.0 722.5,396.1 706.9,388.9" fill="#dfba4d" />
<polygon points="709.3,387.6 724.8,394.7 728.1,392.8 712.6,385.7" fill="#dfba4d" />
<polygon points="714.9,384.3 730.5,391.4 733.7,389.5 718.2,382.4" fill="#dfba4d" />
<polygon points="720.6,381.1 736.1,388.1 739.4,386.2 723.9,379.1" fill="#dfba4d" />
<polygon points="726.2,377.8 741.7,384.8 745.0,382.9 729.5,375.9" fill="#dfba4d" />
<polygon points="731.9,374.5 747.3,381.6 750.6,379.7 735.2,372.6" fill="#dfba4d" />
<polygon points="737.5,371.3 752.9,378.3 756.2,376.4 740.8,369.4" fill="#dfba4d" />
<polygon points="743.2,368.0 758.6,375.0 761.8,373.1 746.4,366.1" fill="#dfba4d" />
<polygon points="748.8,364.7 764.2,371.7 767.5,369.8 752.1,362.8" fill="#dfba4d" />
<polygon points="754.4,361.5 769.8,368.4 773.1,366.5 757.7,359.6" fill="#dfba4d" />
<polygon points="760.1,358.2 775.4,365.2 778.7,363.3 763.4,356.3" fill="#dfba4d" />
<polygon points="765.7,355.0 781.0,361.9 784.3,360.0 769.0,353.0" fill="#dfba4d" />
<polygon points="771.4,351.7 786.7,358.6 789.9,356.7 774.7,349.8" fill="#dfba4d" />
<polygon points="777.0,348.4 792.3,355.3 795.6,353.4 780.3,346.5" fill="#dfba4d" />
<polygon points="782.7,345.2 797.9,352.0 801.2,350.1 786.0,343.3" fill="#dfba4d" />
<polygon points="788.3,341.9 803.5,348.8 806.8,346.9 791.6,340.0" fill="#dfba4d" />
<polygon points="794.0,338.6 809.1,345.5 812.4,343.6 797.3,336.7" fill="#dfba4d" />
<polygon points="799.6,335.4 814.8,342.2 818.1,340.3 802.9,333.5" fill="#dfba4d" />
<polygon points="805.3,332.1 820.4,338.9 823.7,337.0 808.5,330.2" fill="#dfba4d" />
<polygon points="810.9,328.9 826.0,335.7 829.3,333.7 814.2,326.9" fill="#dfba4d" />
<ellipse cx="733.3" cy="293.1" rx="4.3" ry="2.7" fill="#e6c251" />
<ellipse cx="744.6" cy="299.5" rx="4.3" ry="2.7" fill="#e6c251" />
<ellipse cx="755.8" cy="306.2" rx="4.3" ry="2.7" fill="#e6c251" />
<ellipse cx="767.1" cy="312.6" rx="4.3" ry="2.7" fill="#e6c251" />
<ellipse cx="721.9" cy="299.5" rx="4.3" ry="2.7" fill="#e6c251" />
<ellipse cx="733.3" cy="306.2" rx="4.3" ry="2.7" fill="#e6c251" />
<ellipse cx="744.6" cy="312.6" rx="4.3" ry="2.7" fill="#e6c251" />
<ellipse cx="755.8" cy="319.1" rx="4.3" ry="2.7" fill="#e6c251" />
<polyline points="655.5,224.3 663.4,218.6 673.4,224.4" fill="none" stroke="#fff" stroke-width="1.5"/>
<polyline points="829,314.5 838.7,319.4 831.3,325.2" fill="none" stroke="#fff" stroke-width="1.5"/>
<polyline points="655,415.2 663.8,419.9 673.2,415.2" fill="none" stroke="#fff" stroke-width="1.5"/>
<path d="M499.5 314.200L488.800 320.800L499.300 325.800Q496 320.500 499.500 314.200Z" fill="#fff"/>
<text transform="matrix(0.866,0.5,-0.8685,0.4957,432.6,264.2)" font-family="Liberation Sans, sans-serif" font-weight="bold" fill="#fff" stroke="#fff" stroke-width="0.45" font-size="15">DEBUG</text>
<text transform="matrix(0.866,0.5,-0.8685,0.4957,822,240.5)" font-family="Liberation Sans, sans-serif" font-weight="bold" fill="#fff" stroke="#fff" stroke-width="0.45" font-size="13.7" textLength="150.5" lengthAdjust="spacingAndGlyphs">KAME FMU rev.2 2019</text>
<text transform="matrix(0.866,0.5,-0.8685,0.4957,353.700,333.300)" font-family="Liberation Sans, sans-serif" font-weight="bold" font-style="italic" font-size="42.5" fill="#fdfafa" stroke="#fdfafa" stroke-width="2.2" stroke-linejoin="round">Altium</text>
<text transform="matrix(0.866,0.5,-0.8685,0.4957,468.500,399.500)" font-family="Liberation Sans, sans-serif" font-weight="bold" font-size="5.500" fill="#fff">TM</text>
<path d="M730 395.500 L787.500 435.500 Q795 440 805.500 436 L873.500 396.500 L860.500 389.500" fill="none" stroke="#fff" stroke-width="2.300"/>
<polygon points="860.5,391.0 868.0,387.0 874.5,395.5 862.0,402.0" fill="#fdfafa" />
<text transform="matrix(0.866,0.5,-0.8685,0.4957,741.1,427.5)" font-family="Liberation Sans, sans-serif" font-weight="bold" fill="#fff" stroke="#fff" stroke-width="0.45" font-size="14.5" textLength="30.2" lengthAdjust="spacingAndGlyphs">IMU</text>
<polygon points="598.3,183.4 609.0,188.9 609.0,192.1 598.3,186.6" fill="#6f5f55" />
<polygon points="609.0,188.9 621.4,182.7 621.4,185.9 609.0,192.1" fill="#ffffff" />
<polygon points="611.0,176.2 621.4,182.7 609.0,188.9 598.3,183.4" fill="#857266" />
<polygon points="443.7,214.0 511.2,251.9 511.2,288.3 443.7,251.5" fill="#434e0d" />
<polygon points="511.2,251.9 613.6,192.8 613.6,230.0 511.2,288.3" fill="#ffffc3" />
<polygon points="546.4,154.3 613.6,192.8 511.2,251.9 443.7,214.0" fill="#6c7f1d" />
<polygon points="683.4,204.2 716.7,222.8 716.7,228.3 683.4,209.7" fill="#2b2900" />
<polygon points="716.7,222.8 738.2,210.5 738.2,216.0 716.7,228.3" fill="#ffff8c" />
<polygon points="704.3,191.5 738.2,210.5 716.7,222.8 683.4,204.2" fill="#474300" />
<line x1="694.1" y1="210.1" x2="715.7" y2="197.8" stroke="#d8d860" stroke-width="0.8" />
<line x1="705.5" y1="216.4" x2="726.8" y2="204.2" stroke="#d8d860" stroke-width="0.8" />
<polygon points="457.4,289.7 469.1,294.6 469.1,297.6 457.4,292.7" fill="#6f5f55" />
<polygon points="469.1,294.6 486.8,283.8 486.8,286.8 469.1,297.6" fill="#ffffff" />
<polygon points="476.0,278.5 486.8,283.8 469.1,294.6 457.4,289.7" fill="#857266" />
<polygon points="469.1,294.6 478.9,300.5 478.9,305.8 469.1,299.9" fill="#2b2900" />
<polygon points="478.9,300.5 500.5,288.3 500.5,293.6 478.9,305.8" fill="#ffff8c" />
<polygon points="488.7,282.4 500.5,288.3 478.9,300.5 469.1,294.6" fill="#474300" />
<polygon points="459.6,364.6 470.3,368.9 470.3,374.2 459.6,369.9" fill="#2b2900" />
<polygon points="470.3,368.9 491.3,357.6 491.3,362.9 470.3,374.2" fill="#ffff8c" />
<polygon points="480.1,350.9 491.3,357.6 470.3,368.9 459.6,364.6" fill="#474300" />
<polygon points="475.8,373.8 486.6,378.3 486.6,383.3 475.8,378.8" fill="#2b2900" />
<polygon points="486.6,378.3 507.5,366.6 507.5,371.6 486.6,383.3" fill="#ffff8c" />
<polygon points="496.8,360.1 507.5,366.6 486.6,378.3 475.8,373.8" fill="#474300" />
<polygon points="502.2,349.4 523.2,360.1 523.2,364.7 502.2,354.0" fill="#2b2900" />
<polygon points="523.2,360.1 533.9,354.8 533.9,359.4 523.2,364.7" fill="#ffff8c" />
<polygon points="512.8,341.9 533.9,354.8 523.2,360.1 502.2,349.4" fill="#474300" />
<polygon points="500.3,376.8 520.2,364.6 531.0,369.9 511.4,381.6" fill="#474300" />
<line x1="511.4" y1="381.6" x2="531.0" y2="369.9" stroke="#d8d860" stroke-width="0.8" />
<polygon points="511.4,382.2 550.6,393.4 550.6,397.7 511.4,386.5" fill="#000030" />
<polygon points="550.6,393.4 566.2,385.2 566.2,389.5 550.6,397.7" fill="#8a8af2" />
<polygon points="535.9,367.6 566.2,385.2 550.6,393.4 511.4,382.2" fill="#00004c" />
<polygon points="551.5,398.0 567.2,390.5 579.0,396.0 562.0,404.5" fill="#474300" />
<polygon points="559.0,406.2 569.8,412.1 569.8,417.1 559.0,411.2" fill="#2b2900" />
<polygon points="569.8,412.1 590.9,400.3 590.9,405.3 569.8,417.1" fill="#ffff8c" />
<polygon points="579.6,393.9 590.9,400.3 569.8,412.1 559.0,406.2" fill="#474300" />
<polygon points="508.1,395.3 542.2,414.9 542.2,431.9 508.1,412.3" fill="#2d2b00" />
<polygon points="542.2,414.9 562.3,404.1 562.3,421.1 542.2,431.9" fill="#ffff7a" />
<polygon points="528.1,383.6 562.3,404.1 542.2,414.9 508.1,395.3" fill="#423f00" />
<polygon points="572.7,414.6 583.1,420.5 583.1,425.5 572.7,419.6" fill="#2b2900" />
<polygon points="583.1,420.5 604.6,409.1 604.6,414.1 583.1,425.5" fill="#ffff8c" />
<polygon points="593.3,402.3 604.6,409.1 583.1,420.5 572.7,414.6" fill="#474300" />
<polygon points="585.4,423.8 596.2,428.7 596.2,431.2 585.4,426.3" fill="#6f5f55" />
<polygon points="596.2,428.7 614.8,417.0 614.8,419.5 596.2,431.2" fill="#ffffff" />
<polygon points="606.0,412.1 614.8,417.0 596.2,428.7 585.4,423.8" fill="#857266" />
<polygon points="550.6,429.6 569.2,418.8 591.7,431.5 573.0,442.4" fill="#5b8c69" />
<path d="M552.500 432.500l3.500 2M566 441l4 2.200" stroke="#fff" stroke-width="1.600"/>
<polygon points="598.2,430.7 607.9,434.6 607.9,439.6 598.2,435.7" fill="#2b2900" />
<polygon points="607.9,434.6 629.5,422.4 629.5,427.4 607.9,439.6" fill="#ffff8c" />
<polygon points="618.7,416.6 629.5,422.4 607.9,434.6 598.2,430.7" fill="#474300" />
<polygon points="610.9,438.5 621.6,442.4 621.6,447.8 610.9,443.9" fill="#2b2900" />
<polygon points="621.6,442.4 642.8,430.7 642.8,436.1 621.6,447.8" fill="#ffff8c" />
<polygon points="632.4,424.4 642.8,430.7 621.6,442.4 610.9,438.5" fill="#474300" />
<polygon points="572.7,443.4 583.5,449.3 583.5,454.3 572.7,448.4" fill="#2b2900" />
<polygon points="583.5,449.3 604.6,437.5 604.6,442.5 583.5,454.3" fill="#ffff8c" />
<polygon points="594.2,431.3 604.6,437.5 583.5,449.3 572.7,443.4" fill="#474300" />
<polygon points="646.1,434.6 666.7,445.3 666.7,448.3 646.1,437.6" fill="#6f5f55" />
<polygon points="666.7,445.3 701.3,424.8 701.3,427.8 666.7,448.3" fill="#ffffff" />
<polygon points="682.3,413.4 701.3,424.8 666.7,445.3 646.1,434.6" fill="#857266" />
<line x1="658.8" y1="427.2" x2="678.4" y2="438.5" stroke="#5e5048" stroke-width="0.8" />
<line x1="670.5" y1="420.3" x2="690.0" y2="431.6" stroke="#5e5048" stroke-width="0.8" />
<polygon points="703.9,410.5 714.1,415.8 714.1,420.8 703.9,415.5" fill="#2b2900" />
<polygon points="714.1,415.8 735.2,403.4 735.2,408.4 714.1,420.8" fill="#ffff8c" />
<polygon points="724.5,397.2 735.2,403.4 714.1,415.8 703.9,410.5" fill="#474300" />
<polygon points="715.3,425.6 736.2,436.7 736.2,441.3 715.3,430.2" fill="#2b2900" />
<polygon points="736.2,436.7 746.0,431.4 746.0,436.0 736.2,441.3" fill="#ffff8c" />
<polygon points="725.4,419.3 746.0,431.4 736.2,436.7 715.3,425.6" fill="#474300" />
<path d="M685.500 445.500l7.500 3.500M709 458l9.500 3 4-2.500" stroke="#fff" stroke-width="1.800" fill="none"/>
<polygon points="685.2,440.5 713.6,454.1 713.6,460.1 685.2,446.5" fill="#c4c4ba" />
<polygon points="713.6,454.1 738.1,440.8 738.1,446.8 713.6,460.1" fill="#ffffff" />
<polygon points="709.7,423.8 738.1,440.8 713.6,454.1 685.2,440.5" fill="#85846b" />
<polygon points="834.8,325.2 846.5,331.5 846.5,336.0 834.8,329.7" fill="#2b2900" />
<polygon points="846.5,331.5 866.0,318.5 866.0,323.0 846.5,336.0" fill="#ffff8c" />
<polygon points="855.3,312.5 866.0,318.5 846.5,331.5 834.8,325.2" fill="#474300" />
<polygon points="885.7,307.2 897.4,312.5 897.4,315.9 885.7,310.6" fill="#6f5f55" />
<polygon points="897.4,312.5 915.0,302.1 915.0,305.5 897.4,315.9" fill="#ffffff" />
<polygon points="903.7,295.9 915.0,302.1 897.4,312.5 885.7,307.2" fill="#857266" />
<polygon points="852.0,358.5 872.0,369.5 867.3,372.0 848.0,361.0" fill="#474300" />
<polygon points="823.4,341.3 874.9,372.2 874.9,377.7 823.4,344.3" fill="#9a9a8a" />
<polygon points="874.9,372.2 942.0,339.9 942.0,347.9 936.0,351.5 935.0,349.0 884.0,378.5 882.0,381.8 874.9,377.7" fill="#ffffff" />
<polygon points="883.3,305.7 942.0,339.9 874.9,372.2 823.4,341.3" fill="#85846b" />
<polygon points="867.1,369.3 874.9,371.8 874.9,378.1 867.1,380.4" fill="#ffff60" />
<polygon points="734.2,385.4 787.1,415.2 787.1,434.4 734.2,400.1" fill="#4b2309" />
<polygon points="787.1,415.2 867.3,369.8 867.3,389.4 787.1,434.4" fill="#ffffa8" />
<polygon points="813.8,339.0 867.3,369.8 787.1,415.2 734.2,385.4" fill="#7e4017" />
<line x1="1002.4" y1="108.8" x2="1002.4" y2="151.0" stroke="#eef2f7" stroke-width="3" stroke-linecap="round"/>
<line x1="966.4" y1="168.5" x2="1002.4" y2="151.0" stroke="#eef2f7" stroke-width="3" stroke-linecap="round"/>
<line x1="1038.8" y1="170.5" x2="1002.4" y2="151.0" stroke="#eef2f7" stroke-width="3" stroke-linecap="round"/>
<text transform="matrix(-0.866,-0.5,0,1,1031,146)" font-family="Liberation Sans, sans-serif" font-size="11" fill="#d4d4d4">Back</text>
<text transform="matrix(-0.866,0.5,0,1,991.500,137.500)" font-family="Liberation Sans, sans-serif" font-size="11" fill="#d4d4d4">Left</text>
<text transform="matrix(0.866,0.5,0.866,-0.5,992,168.500)" font-family="Liberation Sans, sans-serif" font-size="11" fill="#d4d4d4" font-size="8">Bottom</text>
<polygon points="1002.4,108.8 1038.8,129.4 1002.4,148.9 966.4,129.4" fill="rgba(255,255,255,0.72)" />
<polygon points="966.4,129.4 1002.4,148.9 1001.6,190.4 966.4,168.5" fill="rgba(255,255,255,0.72)" />
<polygon points="1002.4,148.9 1038.8,129.4 1038.8,170.5 1001.6,190.4" fill="rgba(255,255,255,0.72)" />
<line x1="966.4" y1="168.5" x2="1000.5" y2="150.5" stroke="#b9dcb9" stroke-width="1.2" />
<line x1="1002.4" y1="108.8" x2="966.4" y2="129.4" stroke="#dde4ee" stroke-width="4" stroke-linecap="round"/>
<line x1="1002.4" y1="108.8" x2="1038.8" y2="129.4" stroke="#dde4ee" stroke-width="4" stroke-linecap="round"/>
<line x1="966.4" y1="129.4" x2="1002.4" y2="148.9" stroke="#dde4ee" stroke-width="4" stroke-linecap="round"/>
<line x1="1038.8" y1="129.4" x2="1002.4" y2="148.9" stroke="#dde4ee" stroke-width="4" stroke-linecap="round"/>
<line x1="1002.4" y1="148.9" x2="1001.6" y2="190.4" stroke="#dde4ee" stroke-width="4" stroke-linecap="round"/>
<line x1="1038.8" y1="129.4" x2="1038.8" y2="170.5" stroke="#dde4ee" stroke-width="4" stroke-linecap="round"/>
<line x1="1038.8" y1="170.5" x2="1001.6" y2="190.4" stroke="#dde4ee" stroke-width="4" stroke-linecap="round"/>
<line x1="966.4" y1="129.4" x2="966.4" y2="168.5" stroke="#2a2aff" stroke-width="1.8" />
<line x1="966.4" y1="168.5" x2="1001.6" y2="190.4" stroke="#ff2222" stroke-width="1.8" />
<text transform="matrix(0.866,0.5,-0.866,0.5,990.300,126)" font-family="Liberation Sans, sans-serif" font-size="11.500" fill="#3a3a3a">Top</text>
<text transform="matrix(0.866,0.5,0,1,972.800,158.300)" font-family="Liberation Sans, sans-serif" font-size="11.500" fill="#3a3a3a">Front</text>
<text transform="matrix(0.866,-0.5,0,1,1011.500,172.200)" font-family="Liberation Sans, sans-serif" font-size="11.500" fill="#3a3a3a">Right</text>
<polygon points="1026.0,202.5 1033.0,199.3 1040.5,202.5 1033.5,205.8" fill="#f4f4f4" stroke="#444" stroke-width="1" stroke-linejoin="round"/>
<polygon points="1026.0,202.5 1033.5,205.8 1033.5,213.5 1026.0,210.0" fill="#8e8e8e" stroke="#444" stroke-width="1" stroke-linejoin="round"/>
<polygon points="1033.5,205.8 1040.5,202.5 1040.5,210.0 1033.5,213.5" fill="#cfcfcf" stroke="#444" stroke-width="1" stroke-linejoin="round"/>
<path d="M1047 205.200l2.600 2.400 2.600-2.400z" fill="#ededed"/>
</svg>
<div id="topbar"></div>
<div class="abs" style="left:0;top:0;width:1068px;height:2px;background:#f3f3f3"></div>
<div id="toolbar"></div>
<div id="leftbar"></div>
<div class="abs" style="left:0;top:219px;width:34px;height:1px;background:#dcdcdc"></div>
<div class="abs" style="left:35px;top:8px;font-size:15.6px;color:#707070;letter-spacing:-0.2px;line-height:18px">onshape</div>
<div class="abs" style="left:131.5px;top:6px;font-size:18px;font-weight:bold;color:#1d1d1d;line-height:24px;letter-spacing:-0.1px">PCB Studio</div>
<div class="abs" style="left:238px;top:11px;font-size:13.5px;color:#8a8a8a;line-height:18px">Main</div>
<div class="abs" style="left:820px;top:2px;width:51px;height:29px;background:#1a50b3;border-radius:4px;color:#fff;font-size:12px;font-weight:bold;line-height:32px;text-align:center;letter-spacing:-0.2px">Share</div>
<div class="abs" style="left:946.500px;top:9.500px;font-size:12.200px;color:#3c3c3c;line-height:18px;letter-spacing:-0.03px">Onshape Instructor</div>
<div id="search"><span>Search</span></div>
<div class="sep" style="left:120px"></div>
<div class="sep" style="left:182.5px"></div>
<div class="sep" style="left:245px"></div>
<div class="sep" style="left:308.5px"></div>
<div class="sep" style="left:633.5px"></div>
<div id="tree"></div>
<div class="abs" style="left:35px;top:112.500px;width:206px;height:20.500px;background:#b3dcf5"></div>
<div class="abs" style="left:241px;top:67px;width:13px;height:520px;background:#f7f7f7"></div>
<div class="abs" style="left:243.500px;top:83px;width:7.500px;height:252px;background:#8a8a8a;border-radius:4px"></div>
<div class="guide" style="left:54px;top:134px;height:453px"></div>
<div class="guide" style="left:65px;top:156px;height:112px"></div>
<div class="guide" style="left:65px;top:290px;height:297px"></div>
<div class="guide" style="left:76px;top:201px;height:22px"></div>
<div class="guide" style="left:76px;top:245px;height:22px"></div>
<div class="row" style="left:59px;top:67.8px;letter-spacing:-0.250px">Boards (2)</div>
<div class="row" style="left:87px;top:90.1px;letter-spacing:-0.028px">Nikolai Test Board</div>
<div class="row" style="left:87px;top:112.3px;letter-spacing:-0.259px">Sample - Kame_FMU</div>
<div class="row" style="left:97px;top:134.6px;letter-spacing:-0.140px">Board</div>
<div class="row" style="left:107.5px;top:156.9px;letter-spacing:-0.191px">Layers (15)</div>
<div class="row" style="left:107.5px;top:179.1px;letter-spacing:-0.117px">Layer stackups (1)</div>
<div class="row" style="left:118px;top:201.4px;letter-spacing:-0.206px">Board_Stackup (15)</div>
<div class="row" style="left:107.5px;top:223.7px;letter-spacing:-0.146px">Board regions</div>
<div class="row" style="left:118px;top:246.0px;letter-spacing:-0.100px">Board Outline</div>
<div class="row" style="left:97px;top:268.2px;letter-spacing:-0.153px">Components (35)</div>
<div class="row" style="left:107.5px;top:290.5px;letter-spacing:-0.338px">RESC0402(1005)_L_C...</div>
<div class="row" style="left:107.5px;top:312.8px;letter-spacing:-0.338px">RESC0402(1005)_L_C...</div>
<div class="row" style="left:107.5px;top:335.0px;letter-spacing:-0.190px">CAPC0402(1005)60_L...</div>
<div class="row" style="left:107.5px;top:357.3px;letter-spacing:-0.335px">PTH-M2D5X5_CMP-00...</div>
<div class="row" style="left:107.5px;top:379.6px;letter-spacing:-0.333px">RESC0402(1005)_L_C...</div>
<div class="row" style="left:107.5px;top:401.9px;letter-spacing:-0.036px">New_footprint_1_CMP...</div>
<div class="row" style="left:107.5px;top:424.1px;letter-spacing:-0.390px">DSG0008A_V_CMP-01...</div>
<div class="row" style="left:107.5px;top:446.4px;letter-spacing:-0.333px">RESC0402(1005)_L_C...</div>
<div class="row" style="left:107.5px;top:468.7px;letter-spacing:-0.245px">JST-SM06B-SRSS-TB...</div>
<div class="row" style="left:107.5px;top:490.9px;letter-spacing:-0.190px">CAPC0402(1005)60_L...</div>
<div class="row" style="left:107.5px;top:513.2px;letter-spacing:-0.435px">EPSON-FA-128_V_CM...</div>
<div class="row" style="left:107.5px;top:535.5px;letter-spacing:-0.325px">DRY0006A_V_CMP-03...</div>
<div class="row" style="left:107.5px;top:557.7px;letter-spacing:-0.390px">DQS0020A_V_CMP-01...</div>
<div class="abs" style="left:259px;top:319px;width:29.500px;height:30px;border:1px solid #d8d8d8;background:#fff"></div>
<div class="abs" style="left:1040px;top:297px;width:28px;height:58.500px;border:1px solid #d8d8d8;border-right:none;background:#fff"></div>
<div class="abs" style="left:1040px;top:326px;width:28px;height:1px;background:#d8d8d8"></div>
<div class="abs" style="left:1066px;top:35px;width:1px;height:578px;background:#b9b9b9"></div>
<div class="abs" style="left:1067px;top:35px;width:1px;height:578px;background:#f1f1f1"></div>
<div id="tabbar"></div>
<div class="abs" style="left:0;top:587px;width:34.500px;height:26px;background:#fafafa"></div>
<div class="tab" style="left:68.500px;top:587px;width:175px;position:absolute"><span style="position:absolute;left:29.800px;letter-spacing:-0.08px">Part Studio 1</span></div>
<div class="tab active" style="left:245.500px;top:587px;width:174.500px;position:absolute;height:24.200px"><span style="position:absolute;left:47.200px;letter-spacing:-0.22px">PCB Studio</span></div>
<div class="tab" style="left:421.500px;top:587px;width:176.500px;position:absolute"><span style="position:absolute;left:29.800px;letter-spacing:0.05px">Assembly 1</span></div>
<div class="abs" style="left:0;top:611px;width:1068px;height:2px;background:#d4d4d4"></div>
<svg class="abs" style="left:0;top:0;pointer-events:none" width="1068" height="613" viewBox="0 0 1068 613">
<g fill="#4db748"><polygon points="12.6,13.3 20.7,8.1 23.6,9.8 15.5,14.8 15.5,18.7 12.6,17.2"/><polygon points="22.9,12 25.3,10.8 29.3,13.3 29.3,22.1 26.3,23.8 26.3,14.3"/><polygon points="12.6,19.4 20.7,24.1 23.9,22.1 23.9,25.5 20.7,27.2 12.6,22.6"/></g>
<path d="M20.7 13.9l3.300 1.900v3.800l-3.300 1.900-3.300-1.900v-3.800z" fill="none" stroke="#444" stroke-width="1.300" stroke-linejoin="round"/>
<rect x="106.3" y="12.2" width="14.6" height="2.6" rx="0.6" fill="#222"/>
<rect x="106.3" y="17.4" width="14.6" height="2.6" rx="0.6" fill="#222"/>
<rect x="106.3" y="22.7" width="14.6" height="2.6" rx="0.6" fill="#222"/>
<g transform="translate(286,18.5) rotate(-45)" fill="none" stroke="#222" stroke-width="1.5"><rect x="-7" y="-2.4" width="8" height="4.8" rx="2.4"/><rect x="-1" y="-2.4" width="8" height="4.8" rx="2.4"/></g>
<g fill="none" stroke="#555" stroke-width="1.5" stroke-linecap="round" stroke-linejoin="round"><path d="M714.5 11.5c-2.4 0-2.4 1-2.4 3.2 0 2.4-.4 3.4-1.8 4 1.4.6 1.8 1.6 1.8 4 0 2.2 0 3.2 2.4 3.2M723 11.5c2.4 0 2.4 1 2.4 3.2 0 2.4.4 3.4 1.8 4-1.4.6-1.8 1.6-1.8 4 0 2.2 0 3.2-2.4 3.2"/><path d="M715.2 18.6l2.4 2.8 4-5.6"/></g>
<path d="M747.5 10.5c-3.2 0-5 2.4-5 5.6v4l-2.2 3.2v.9h14.4v-.9l-2.2-3.2v-4c0-3.2-1.8-5.6-5-5.6zM745.3 25.2a2.3 2.3 0 0 0 4.4 0z" fill="#666"/>
<g fill="none" stroke="#555" stroke-width="1.5"><rect x="767.8" y="12" width="5.6" height="5.6"/><rect x="767.8" y="20.4" width="5.6" height="5.6"/><rect x="776.2" y="20.4" width="5.6" height="5.6"/><path d="M779 11.2v7.2M775.4 14.8h7.2"/></g>
<path d="M802.5 11c-4.2 0-7.2 3-7.2 6.8 0 2.4 1 4 2.4 5.4v3.8h7.2v-2.4h2.2c.9 0 1.4-.5 1.4-1.4v-2.4l1.6-.7-1.6-3.1c-.2-3.6-2.6-6-6-6z" fill="#5a5a5a"/>
<circle cx="800.8" cy="17.6" r="2" fill="none" stroke="#e9e9e9" stroke-width="1.1"/><circle cx="805" cy="15" r="1.3" fill="none" stroke="#e9e9e9" stroke-width="0.9"/>
<circle cx="888.5" cy="19" r="7.9" fill="#555"/>
<path d="M903 17l3.6 4 3.6-4z" fill="#333"/>
<path d="M1055.5 16.3l3.8 4.2 3.8-4.2z" fill="#333"/>
<clipPath id="avc"><circle cx="931.5" cy="19" r="11"/></clipPath>
<circle cx="931.5" cy="19" r="11" fill="#1a50b3"/>
<g clip-path="url(#avc)"><ellipse cx="931.5" cy="17.5" rx="5.3" ry="6.3" fill="#fff"/><path d="M921 32c0-6 4-8.500 10.500-8.500s10.500 2.500 10.500 8.500z" fill="#fff"/></g>
<rect x="1066" y="0" width="2" height="35" fill="#2e5c5c"/>
<g fill="#222"><path d="M54 44.300l4.700 5.500h-3v4.500h-3.400v-4.500h-3z"/><rect x="47.500" y="56.200" width="13" height="1.800"/></g>
<path d="M75.500 49.200l3.200 3.300 3.200-3.300z" fill="#222"/>
<g fill="#222"><path d="M103 55.200l4.700-5.500h-3v-5.400h-3.400v5.400h-3z"/><path d="M96 55.500h1.500v2.300h11v-2.300h1.500v3.800h-14z"/></g>
<circle cx="137" cy="51.500" r="7.700" fill="none" stroke="#222" stroke-width="1.500"/>
<path d="M137 46.500l4 4.500h-2.500v4.500h-3v-4.500h-2.500z" fill="#222"/>
<circle cx="166.5" cy="51.500" r="7.700" fill="none" stroke="#222" stroke-width="1.500"/>
<path d="M166.5 56.500l4-4.500h-2.500v-4.500h-3v4.500h-2.500z" fill="#222"/>
<g fill="none" stroke="#333" stroke-width="1.300" stroke-linejoin="round"><path d="M195.800 49.600h9.800v9h-9.800z" fill="#f2f2f2"/><path d="M195.800 49.600l-2.500-2.500v9l2.500 2.500M193.300 47.100h3.200M205.600 49.600l-2-2.200h-1.200"/></g><path d="M196.800 44.800c3.200-.6 5.200 1.200 5.400 4.600h2.100l-3.200 4-3.200-4h2.100c-.1-2.400-1.200-3.600-3.200-4.600z" fill="#222"/>
<g transform="translate(221,43)"><rect x="0.7" y="4.200" width="13.600" height="11" rx="1" fill="#e4e4e4" stroke="#333" stroke-width="1.200"/><path d="M2.800 7.300h2l1.200 1.200M2.800 10h2.600M3 13h4.500" stroke="#333" stroke-width="1.100" fill="none"/><rect x="9" y="9.600" width="3" height="2.300" fill="#333"/><rect x="8.500" y="12.800" width="3.800" height="1.300" fill="#333"/><path d="M8 8.500l7.500-7.200" stroke="#fff" stroke-width="3.500"/><path d="M8.500 8l7-6.700M11 1h4.800v4.800" stroke="#222" stroke-width="1.600" fill="none"/></g>
<g transform="translate(254,43)"><rect x="6.500" y="1" width="9.500" height="11.500" rx="1.800" fill="#f6f6f6" stroke="#444" stroke-width="1.100"/><rect x="4.500" y="3" width="9.500" height="11.500" rx="1.800" fill="#f6f6f6" stroke="#444" stroke-width="1.100"/><rect x="2.500" y="5" width="9.500" height="11.500" rx="1.800" fill="#f6f6f6" stroke="#333" stroke-width="1.200"/><path d="M0.600 7.800h2M0.600 10.500h2M0.600 13.200h2M12 7.800h1.800M14 5.600h1.800M16 3.600h1.600M14 8.600h1.800" stroke="#333" stroke-width="1.200"/><path d="M9.500 16.200l5-5 2 2-5 5-2.500.5z" fill="#f4f4f4" stroke="#444" stroke-width="0.900"/></g>
<circle cx="292" cy="51.800" r="8.600" fill="#c3d8ee"/><path d="M294 56.600a5.200 5.200 0 1 0 -5.500 -1.200" fill="none" stroke="#fff" stroke-width="2.400"/><path d="M291.500 53.500h5.200v5.200z" fill="#fff"/>
<circle cx="586.200" cy="50" r="5.200" fill="none" stroke="#999" stroke-width="1.600"/><path d="M590 54l5.500 5.500" stroke="#999" stroke-width="2" stroke-linecap="round"/>
<path d="M613 48l8.500 8.500M621.500 48l-8.500 8.500" stroke="#aaa" stroke-width="1.300"/>
<g transform="translate(650.800,52)"><rect x="-1.700" y="-7.500" width="3.400" height="4" fill="#444" transform="rotate(0)"/><rect x="-1.700" y="-7.500" width="3.400" height="4" fill="#444" transform="rotate(45)"/><rect x="-1.700" y="-7.500" width="3.400" height="4" fill="#444" transform="rotate(90)"/><rect x="-1.700" y="-7.500" width="3.400" height="4" fill="#444" transform="rotate(135)"/><rect x="-1.700" y="-7.500" width="3.400" height="4" fill="#444" transform="rotate(180)"/><rect x="-1.700" y="-7.500" width="3.400" height="4" fill="#444" transform="rotate(225)"/><rect x="-1.700" y="-7.500" width="3.400" height="4" fill="#444" transform="rotate(270)"/><rect x="-1.700" y="-7.500" width="3.400" height="4" fill="#444" transform="rotate(315)"/><circle r="5.300" fill="#444"/><circle r="2.300" fill="#fff"/></g>
<circle cx="680.300" cy="51.800" r="7.800" fill="#777"/>
<g fill="none" stroke="#222" stroke-width="1.600"><circle cx="12" cy="46.500" r="2.600"/><path d="M12 49.200v6.500h3.500M17 46.500h9M17.500 51h8.500M17.500 55.700h8.500"/></g><circle cx="12" cy="55.700" r="1.500" fill="#222"/>
<g><circle cx="13.500" cy="82" r="2.700" fill="#222"/><path d="M13.500 72v20" stroke="#222" stroke-width="1.500" stroke-dasharray="2 1.500"/><path d="M22 80.500v8M18 84.500h8" stroke="#1a50b3" stroke-width="1.800"/></g>
<path d="M17.500 103.500c5 0 8.500 2.600 8.500 6s-3.500 6-8.500 6c-1 0-1.900-.1-2.700-.3l-4.300 3.600 1.300-4.800c-1.700-1.100-2.800-2.700-2.800-4.500 0-3.400 3.500-6 8.500-6z" fill="#222"/>
<g transform="translate(10,135.500)"><rect x="0.800" y="0.800" width="12" height="14" rx="2" fill="none" stroke="#222" stroke-width="1.500"/><path d="M3.500 4.500h6.500M3.500 7.500h5M3.500 10.500h3" stroke="#222" stroke-width="1.400"/><path d="M7.500 12.800l6.500-7 2 2-6.500 7-2.500.5z" fill="#222" stroke="#fafafa" stroke-width="0.600"/></g>
<g transform="translate(8,164)" fill="none" stroke="#222" stroke-width="1.400" stroke-linejoin="round"><path d="M1 8l5.500-2.500 5.500 2.500v6l-5.500 2.800-5.500-2.800zM1 8l5.500 2.600 5.500-2.600M6.500 10.600v6.200"/><circle cx="14.200" cy="4.200" r="3.500"/><path d="M12.500 10.500v-3" /></g>
<g fill="none" stroke="#222" stroke-width="1.500"><circle cx="18.500" cy="205.500" r="6"/><path d="M18.500 205.500l3-3M16.500 196.500h4M18.500 196.500v3M23 199.800l1.300-1.300" /><path d="M9 203h3M8 206h3.500M9.500 209h2.500" stroke-width="1.100"/></g>
<g transform="translate(10,227.500)"><rect x="0.800" y="0.800" width="12.600" height="14.500" rx="2" fill="none" stroke="#222" stroke-width="1.500"/><path d="M7 4.500h4M7 8h4M7 11.500h4" stroke="#222" stroke-width="1.400"/><path d="M3 4.500l1 1 1.500-2M3 8l1 1 1.500-2M3 11.500l1 1 1.500-2" stroke="#222" stroke-width="1" fill="none"/></g>
<path d="M9 595.500h15.500v6.500h-15.500z" fill="#222"/><circle cx="19" cy="602" r="3.800" fill="#fafafa" stroke="#222" stroke-width="1.400"/><path d="M21.800 604.800l3 3" stroke="#222" stroke-width="1.600"/>
<path d="M243 77.500l4.500-6 4.500 6z" fill="#888"/>
<path d="M243 575.500l4.500 6 4.500-6z" fill="#888"/>
<g transform="translate(36,69.3)"><path d="M3 4.5l3-3.2h13.5v11l-3 3.2" fill="#d8d8d8" stroke="#555" stroke-width="1.1"/><path d="M1.7 6l3-3.2h13.3v11l-3 3.2" fill="#d8d8d8" stroke="#555" stroke-width="1.1"/><rect x="0.7" y="5.2" width="15.3" height="11.6" rx="1.2" fill="#e6e6e6" stroke="#444" stroke-width="1.3"/><path d="M3 8.6h2.3l1.3 1.3M3 11.6h2.8M8.6 8h2M3 14.4h5" stroke="#333" stroke-width="1.2" fill="none"/><rect x="10.6" y="9.6" width="3" height="2.6" fill="#333"/><rect x="9.4" y="13.6" width="4.2" height="1.4" fill="#333"/></g>
<path d="M53.1 96.6 L57.2 100.6 L53.1 104.6" fill="none" stroke="#222" stroke-width="1.7"/>
<g transform="translate(65.8,93.6) scale(0.9,0.95)"><rect x="0.7" y="1.7" width="16.6" height="11.6" rx="1.6" fill="#e4e4e4" stroke="#444" stroke-width="1.3"/><path d="M3 5h2.5l1.5 1.5M3 8.2h3M9 4.5h2M3.2 11h5" stroke="#333" stroke-width="1.2" fill="none"/><rect x="11.5" y="6.3" width="3.2" height="2.6" fill="#333"/><rect x="10" y="10.2" width="4.5" height="1.5" fill="#333"/><path d="M11 15.5l5.2-5.2 2 2-5.2 5.2-2.6.6z" fill="#f4f4f4" stroke="#555" stroke-width="1"/></g>
<path d="M51.0 121.2 L55.0 125.0 L59.0 121.2" fill="none" stroke="#222" stroke-width="1.7"/>
<g transform="translate(65.8,115.8) scale(0.9,0.95)"><rect x="0.7" y="1.7" width="16.6" height="11.6" rx="1.6" fill="#e4e4e4" stroke="#444" stroke-width="1.3"/><path d="M3 5h2.5l1.5 1.5M3 8.2h3M9 4.5h2M3.2 11h5" stroke="#333" stroke-width="1.2" fill="none"/><rect x="11.5" y="6.3" width="3.2" height="2.6" fill="#333"/><rect x="10" y="10.2" width="4.5" height="1.5" fill="#333"/></g>
<path d="M62.0 143.5 L66.0 147.3 L70.0 143.5" fill="none" stroke="#222" stroke-width="1.7"/>
<g transform="translate(76,138.6)"><path d="M3.2 1h13.2v9.2l-2 2.3H1V3.3z" fill="#dcdcdc" stroke="#555" stroke-width="1.1" stroke-linejoin="round"/><path d="M1 3.3h13.4v9.2M14.4 3.3l2-2.3" fill="none" stroke="#555" stroke-width="1"/></g>
<path d="M75.1 163.4 L79.2 167.4 L75.1 171.4" fill="none" stroke="#222" stroke-width="1.7"/>
<g transform="translate(86,159.4)"><path d="M1 12.5l4-9h12l-4 9z" fill="#444" stroke="#333" stroke-width="1" stroke-linejoin="round"/><path d="M2.3 9.6h12M3.6 6.6h12" stroke="#bbb" stroke-width="0.9"/><path d="M1 12.5v1.8h12l4-9V3.5" fill="none" stroke="#333" stroke-width="1"/></g>
<path d="M73.0 188.0 L77.0 191.8 L81.0 188.0" fill="none" stroke="#222" stroke-width="1.7"/>
<g transform="translate(86,182.1)"><path d="M1 5.2l4.4-4.2h11.2v9l-4.4 4.4H1z" fill="#e2e2e2" stroke="#444" stroke-width="1.1" stroke-linejoin="round"/><path d="M1 5.2h11.2v9.2M12.2 5.2l4.4-4.2M1 8.3h11.2l4.4-4.2M1 11.3h11.2l4.4-4.2" fill="none" stroke="#444" stroke-width="1"/></g>
<path d="M85.6 207.9 L89.7 211.9 L85.6 215.9" fill="none" stroke="#222" stroke-width="1.7"/>
<g transform="translate(96.5,204.4)"><path d="M1 5.2l4.4-4.2h11.2v9l-4.4 4.4H1z" fill="#e2e2e2" stroke="#444" stroke-width="1.1" stroke-linejoin="round"/><path d="M1 5.2h11.2v9.2M12.2 5.2l4.4-4.2M1 8.3h11.2l4.4-4.2M1 11.3h11.2l4.4-4.2" fill="none" stroke="#444" stroke-width="1"/></g>
<path d="M73.0 232.6 L77.0 236.4 L81.0 232.6" fill="none" stroke="#222" stroke-width="1.7"/>
<g transform="translate(86,227.7)"><path d="M3.2 1h13.2v9.2l-2 2.3H1V3.3z" fill="#dcdcdc" stroke="#555" stroke-width="1.1" stroke-linejoin="round"/><path d="M1 3.3h13.4v9.2M14.4 3.3l2-2.3" fill="none" stroke="#555" stroke-width="1"/></g>
<g transform="translate(96.5,250.0)"><path d="M3.2 1h13.2v9.2l-2 2.3H1V3.3z" fill="#dcdcdc" stroke="#555" stroke-width="1.1" stroke-linejoin="round"/><path d="M1 3.3h13.4v9.2M14.4 3.3l2-2.3" fill="none" stroke="#555" stroke-width="1"/></g>
<path d="M62.0 277.1 L66.0 280.9 L70.0 277.1" fill="none" stroke="#222" stroke-width="1.7"/>
<g transform="translate(75,270.4)"><path d="M3.4 4.6l3.6-3.4h9.6v10.6l-3.6 3.6H3.4z" fill="#f2f2f2" stroke="#444" stroke-width="1.1" stroke-linejoin="round"/><path d="M3.4 4.6h9.6v10.8M13 4.6l3.6-3.4" fill="none" stroke="#444" stroke-width="1"/><path d="M1.2 6.6h2.4M1.2 9.4h2.4M1.2 12.2h2.4M13 7h2.4M13.4 9.8h2.6M13 12.6h2" stroke="#333" stroke-width="1.4"/></g>
<path d="M75.1 297.0 L79.2 301.0 L75.1 305.0" fill="none" stroke="#222" stroke-width="1.7"/>
<g transform="translate(86,293.0)"><rect x="3" y="1" width="10.6" height="13.6" rx="2" fill="#eef1f3" stroke="#3a3a3a" stroke-width="1.3"/><path d="M0.8 3.6h2.4M0.8 6.5h2.4M0.8 9.4h2.4M0.8 12.3h2.4M13.6 3.6h2.2M13.6 6.5h2.2" stroke="#333" stroke-width="1.5"/><path d="M9 15.2l5.4-5.4 2.2 2.2-5.4 5.4-2.8.6z" fill="#f4f4f4" stroke="#555" stroke-width="1"/></g>
<path d="M75.1 319.3 L79.2 323.3 L75.1 327.3" fill="none" stroke="#222" stroke-width="1.7"/>
<g transform="translate(86,315.3)"><rect x="3" y="1" width="10.6" height="13.6" rx="2" fill="#eef1f3" stroke="#3a3a3a" stroke-width="1.3"/><path d="M0.8 3.6h2.4M0.8 6.5h2.4M0.8 9.4h2.4M0.8 12.3h2.4M13.6 3.6h2.2M13.6 6.5h2.2" stroke="#333" stroke-width="1.5"/><path d="M9 15.2l5.4-5.4 2.2 2.2-5.4 5.4-2.8.6z" fill="#f4f4f4" stroke="#555" stroke-width="1"/></g>
<path d="M75.1 341.5 L79.2 345.5 L75.1 349.5" fill="none" stroke="#222" stroke-width="1.7"/>
<g transform="translate(86,337.5)"><rect x="3" y="1" width="10.6" height="13.6" rx="2" fill="#eef1f3" stroke="#3a3a3a" stroke-width="1.3"/><path d="M0.8 3.6h2.4M0.8 6.5h2.4M0.8 9.4h2.4M0.8 12.3h2.4M13.6 3.6h2.2M13.6 6.5h2.2" stroke="#333" stroke-width="1.5"/><path d="M9 15.2l5.4-5.4 2.2 2.2-5.4 5.4-2.8.6z" fill="#f4f4f4" stroke="#555" stroke-width="1"/></g>
<path d="M75.1 363.8 L79.2 367.8 L75.1 371.8" fill="none" stroke="#222" stroke-width="1.7"/>
<g transform="translate(86,359.8)"><rect x="3.4" y="1.4" width="10.8" height="13" rx="1" fill="#fff" stroke="#999" stroke-width="1"/><path d="M1 3.8h2.4M1 6.7h2.4M1 9.6h2.4M1 12.5h2.4M14.2 3.8h2.2M14.2 6.7h2.2M14.2 9.6h2.2M14.2 12.5h2.2" stroke="#999" stroke-width="1.2"/><path d="M1.5 2.2l14 11.8" stroke="#777" stroke-width="1"/></g>
<path d="M75.1 386.1 L79.2 390.1 L75.1 394.1" fill="none" stroke="#222" stroke-width="1.7"/>
<g transform="translate(86,382.1)"><rect x="3" y="1" width="10.6" height="13.6" rx="2" fill="#eef1f3" stroke="#3a3a3a" stroke-width="1.3"/><path d="M0.8 3.6h2.4M0.8 6.5h2.4M0.8 9.4h2.4M0.8 12.3h2.4M13.6 3.6h2.2M13.6 6.5h2.2" stroke="#333" stroke-width="1.5"/><path d="M9 15.2l5.4-5.4 2.2 2.2-5.4 5.4-2.8.6z" fill="#f4f4f4" stroke="#555" stroke-width="1"/></g>
<path d="M75.1 408.4 L79.2 412.4 L75.1 416.4" fill="none" stroke="#222" stroke-width="1.7"/>
<g transform="translate(86,404.4)"><rect x="3.4" y="1.4" width="10.8" height="13" rx="1" fill="#fff" stroke="#999" stroke-width="1"/><path d="M1 3.8h2.4M1 6.7h2.4M1 9.6h2.4M1 12.5h2.4M14.2 3.8h2.2M14.2 6.7h2.2M14.2 9.6h2.2M14.2 12.5h2.2" stroke="#999" stroke-width="1.2"/><path d="M1.5 2.2l14 11.8" stroke="#777" stroke-width="1"/></g>
<path d="M75.1 430.6 L79.2 434.6 L75.1 438.6" fill="none" stroke="#222" stroke-width="1.7"/>
<g transform="translate(86,426.6)"><rect x="3" y="1" width="10.6" height="13.6" rx="2" fill="#eef1f3" stroke="#3a3a3a" stroke-width="1.3"/><path d="M0.8 3.6h2.4M0.8 6.5h2.4M0.8 9.4h2.4M0.8 12.3h2.4M13.6 3.6h2.2M13.6 6.5h2.2" stroke="#333" stroke-width="1.5"/><path d="M9 15.2l5.4-5.4 2.2 2.2-5.4 5.4-2.8.6z" fill="#f4f4f4" stroke="#555" stroke-width="1"/></g>
<path d="M75.1 452.9 L79.2 456.9 L75.1 460.9" fill="none" stroke="#222" stroke-width="1.7"/>
<g transform="translate(86,448.9)"><rect x="3" y="1" width="10.6" height="13.6" rx="2" fill="#eef1f3" stroke="#3a3a3a" stroke-width="1.3"/><path d="M0.8 3.6h2.4M0.8 6.5h2.4M0.8 9.4h2.4M0.8 12.3h2.4M13.6 3.6h2.2M13.6 6.5h2.2" stroke="#333" stroke-width="1.5"/><path d="M9 15.2l5.4-5.4 2.2 2.2-5.4 5.4-2.8.6z" fill="#f4f4f4" stroke="#555" stroke-width="1"/></g>
<path d="M75.1 475.2 L79.2 479.2 L75.1 483.2" fill="none" stroke="#222" stroke-width="1.7"/>
<g transform="translate(86,471.2)"><rect x="3" y="1" width="10.6" height="13.6" rx="2" fill="#eef1f3" stroke="#3a3a3a" stroke-width="1.3"/><path d="M0.8 3.6h2.4M0.8 6.5h2.4M0.8 9.4h2.4M0.8 12.3h2.4M13.6 3.6h2.2M13.6 6.5h2.2" stroke="#333" stroke-width="1.5"/><path d="M9 15.2l5.4-5.4 2.2 2.2-5.4 5.4-2.8.6z" fill="#f4f4f4" stroke="#555" stroke-width="1"/></g>
<path d="M75.1 497.4 L79.2 501.4 L75.1 505.4" fill="none" stroke="#222" stroke-width="1.7"/>
<g transform="translate(86,493.4)"><rect x="3" y="1" width="10.6" height="13.6" rx="2" fill="#eef1f3" stroke="#3a3a3a" stroke-width="1.3"/><path d="M0.8 3.6h2.4M0.8 6.5h2.4M0.8 9.4h2.4M0.8 12.3h2.4M13.6 3.6h2.2M13.6 6.5h2.2" stroke="#333" stroke-width="1.5"/><path d="M9 15.2l5.4-5.4 2.2 2.2-5.4 5.4-2.8.6z" fill="#f4f4f4" stroke="#555" stroke-width="1"/></g>
<path d="M75.1 519.7 L79.2 523.7 L75.1 527.7" fill="none" stroke="#222" stroke-width="1.7"/>
<g transform="translate(86,515.7)"><rect x="3" y="1" width="10.6" height="13.6" rx="2" fill="#eef1f3" stroke="#3a3a3a" stroke-width="1.3"/><path d="M0.8 3.6h2.4M0.8 6.5h2.4M0.8 9.4h2.4M0.8 12.3h2.4M13.6 3.6h2.2M13.6 6.5h2.2" stroke="#333" stroke-width="1.5"/><path d="M9 15.2l5.4-5.4 2.2 2.2-5.4 5.4-2.8.6z" fill="#f4f4f4" stroke="#555" stroke-width="1"/></g>
<path d="M75.1 542.0 L79.2 546.0 L75.1 550.0" fill="none" stroke="#222" stroke-width="1.7"/>
<g transform="translate(86,538.0)"><rect x="3" y="1" width="10.6" height="13.6" rx="2" fill="#eef1f3" stroke="#3a3a3a" stroke-width="1.3"/><path d="M0.8 3.6h2.4M0.8 6.5h2.4M0.8 9.4h2.4M0.8 12.3h2.4M13.6 3.6h2.2M13.6 6.5h2.2" stroke="#333" stroke-width="1.5"/><path d="M9 15.2l5.4-5.4 2.2 2.2-5.4 5.4-2.8.6z" fill="#f4f4f4" stroke="#555" stroke-width="1"/></g>
<path d="M75.1 564.2 L79.2 568.2 L75.1 572.2" fill="none" stroke="#222" stroke-width="1.7"/>
<g transform="translate(86,560.2)"><rect x="3" y="1" width="10.6" height="13.6" rx="2" fill="#eef1f3" stroke="#3a3a3a" stroke-width="1.3"/><path d="M0.8 3.6h2.4M0.8 6.5h2.4M0.8 9.4h2.4M0.8 12.3h2.4M13.6 3.6h2.2M13.6 6.5h2.2" stroke="#333" stroke-width="1.5"/><path d="M9 15.2l5.4-5.4 2.2 2.2-5.4 5.4-2.8.6z" fill="#f4f4f4" stroke="#555" stroke-width="1"/></g>
<clipPath id="treeclip"><rect x="35" y="66" width="225" height="521"/></clipPath><g clip-path="url(#treeclip)"><g transform="translate(86,582.5)"><rect x="3" y="1" width="10.6" height="13.6" rx="2" fill="#eef1f3" stroke="#3a3a3a" stroke-width="1.3"/><path d="M0.8 3.6h2.4M0.8 6.5h2.4M0.8 9.4h2.4M0.8 12.3h2.4M13.6 3.6h2.2M13.6 6.5h2.2" stroke="#333" stroke-width="1.5"/><path d="M9 15.2l5.4-5.4 2.2 2.2-5.4 5.4-2.8.6z" fill="#f4f4f4" stroke="#555" stroke-width="1"/></g></g>
<g transform="translate(264,324.5)"><path d="M3 4.5l3-3.2h13.5v11l-3 3.2" fill="#d8d8d8" stroke="#555" stroke-width="1.1"/><path d="M1.7 6l3-3.2h13.3v11l-3 3.2" fill="#d8d8d8" stroke="#555" stroke-width="1.1"/><rect x="0.7" y="5.2" width="15.3" height="11.6" rx="1.2" fill="#e6e6e6" stroke="#444" stroke-width="1.3"/><path d="M3 8.6h2.3l1.3 1.3M3 11.6h2.8M8.6 8h2M3 14.4h5" stroke="#333" stroke-width="1.2" fill="none"/><rect x="10.6" y="9.6" width="3" height="2.6" fill="#333"/><rect x="9.4" y="13.6" width="4.2" height="1.4" fill="#333"/></g>
<g fill="none" stroke="#333" stroke-width="1.400"><rect x="1047.500" y="304.500" width="13" height="15" rx="2"/><path d="M1050.500 309h7M1050.500 312h7M1050.500 315h7" stroke-width="1.200"/></g>
<g fill="none" stroke="#333" stroke-width="1.400"><rect x="1046.500" y="333" width="15" height="15.500" rx="3"/><path d="M1049.500 337h6M1052 340h7M1052 343h7M1052 345.800h7" stroke-width="1.300"/><path d="M1051.500 337.500v8.500" stroke-width="1"/></g>
<path d="M42.500 600h13M49 593.500v13" stroke="#444" stroke-width="2"/>
<g fill="#e9e9e9" stroke="#444" stroke-width="1.200" stroke-linejoin="round"><path d="M80 594.500l2.500-2h3.500v14h-6z"/><path d="M86 593c0-1.500 6-1.500 6 0v13.500h-6z"/></g>
<circle cx="263" cy="598.500" r="5.300" fill="#3f7fd0"/><path d="M263 595v4.500" stroke="#fff" stroke-width="1.800"/><circle cx="263" cy="601.400" r="0.900" fill="#fff"/>
<g transform="translate(273,590.500)"><rect x="0.700" y="0.700" width="13" height="12.500" fill="#f4f4f4" stroke="#333" stroke-width="1.200"/><path d="M3 4h4l2 2h3M3 7.500h3l2 2.500h4M3 10.500h2" fill="none" stroke="#333" stroke-width="1.100"/><rect x="2" y="13.500" width="3.500" height="2.500" fill="#333"/><rect x="9" y="13.500" width="3.500" height="2.500" fill="#333"/></g>
<g fill="#e9e9e9" stroke="#333" stroke-width="1.200" stroke-linejoin="round"><rect x="432.500" y="591" width="11" height="12" rx="1.500" fill="#9a9a9a"/><rect x="435.500" y="593.500" width="11" height="12" rx="1.500" fill="#f2f2f2"/><path d="M432.500 592.500l3 2.500M443.500 591.500l3 2.500"/></g>
<path d="M0 613v-8c0 4 3 6.500 7 6.500h1052c4 0 7.500-3 7.500-7v8.500z" fill="#fff"/>
<path d="M0.500 603c0 5 3 8.500 7 8.500h1052c4 0 7-3 7-7" fill="none" stroke="#9a9a9a" stroke-width="1.200"/>
<path d="M0 613v-4.500c0.500 2 1.500 3.200 3.500 3.900v.6z" fill="#222"/>
<rect x="0" y="2" width="1" height="603" fill="#d6d6d6"/>
</svg>
<div class="abs" style="left:746px;top:6px;width:14px;height:13px;background:#1a50b3;border-radius:2px;color:#fff;font-size:8.5px;font-weight:bold;line-height:13px;text-align:center">9+</div>
<div class="abs" style="left:881px;top:10.5px;width:15px;text-align:center;font-size:13.5px;font-weight:bold;color:#e9e9e9;line-height:17px">?</div>
<div class="abs" style="left:672.800px;top:43.300px;width:15px;text-align:center;font-size:13.500px;font-weight:bold;color:#fff;line-height:17px">?</div>
<div class="abs" style="left:19.500px;top:164.500px;width:6px;font-size:6.500px;font-weight:bold;color:#222;line-height:8px;text-align:center">?</div>
</div>
</body>
</html>
